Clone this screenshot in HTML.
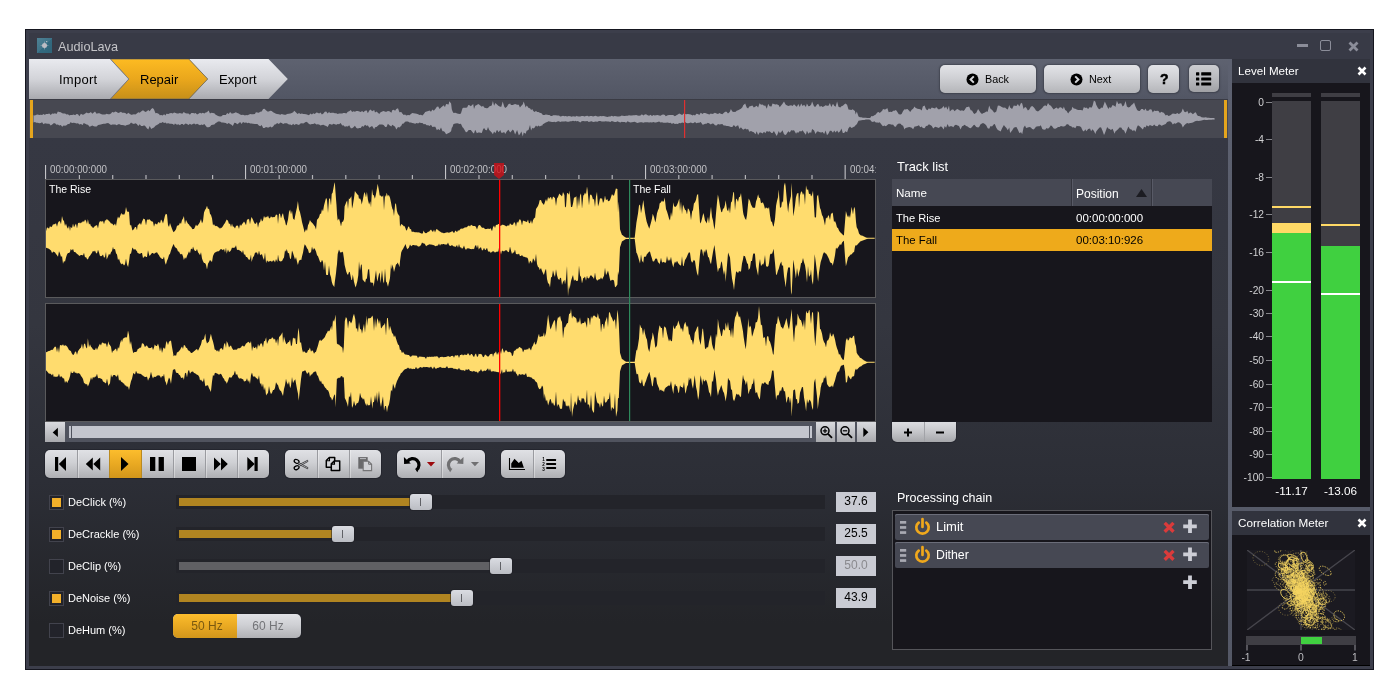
<!DOCTYPE html>
<html lang="en">
<head>
<meta charset="utf-8">
<title>AudioLava</title>
<style>
*{box-sizing:border-box;margin:0;padding:0}
html,body{width:1400px;height:700px;overflow:hidden;background:#fff}
body{font-family:"Liberation Sans",sans-serif;font-size:11px;color:#fff;position:relative}
.a{position:absolute}
.t{position:absolute;white-space:nowrap;line-height:1}
#win{left:25px;top:29px;width:1349px;height:641px;background:#3c3e4b;border:1px solid #15161f}
#title{left:29px;top:33px;width:1341px;height:26px;background:#383a46}
#main{left:29px;top:138px;width:1199px;height:528px;background:linear-gradient(#363843 0%,#34363f 35%,#2c2e36 65%,#232428 92%,#232428 100%)}
#tb{left:29px;top:59px;width:1199px;height:40px;background:linear-gradient(#5e6270,#525664)}
#ov{left:29px;top:99px;width:1199px;height:40px;background:#474851;border-top:1px solid #3a3b44;border-bottom:1px solid #55565c}
.btn{position:absolute;background:linear-gradient(#e2e3e7,#d0d1d5 45%,#b4b5b9);border-radius:5px;color:#000;box-shadow:0 0 1.5px .5px rgba(40,42,52,.45)}
.grp{position:absolute;height:28px;top:450px;border-radius:5px;background:linear-gradient(#e0e1e5,#cfd0d4 45%,#aeafb3);box-shadow:0 0 0 1px rgba(30,32,40,.6);overflow:hidden}
.sep{position:absolute;top:0;width:1px;height:28px;background:#9a9ba0;box-shadow:1px 0 0 rgba(255,255,255,.35)}
.pnl{position:absolute;background:#17161c;border:1px solid #5a5a5c}
.cb{position:absolute;width:15px;height:15px;left:49px;margin-top:-.5px;background:#22232a;border:1px solid #42434d}
.cb.on:after{content:"";position:absolute;left:2px;top:2px;width:9px;height:9px;background:#f2b02a}
.trk{position:absolute;left:176px;width:649px;height:14px;background:#23242a}
.fill{position:absolute;left:179px;height:8px;background:#b18521}
.th{position:absolute;width:22px;height:16px;border-radius:3px;background:linear-gradient(#dadce2,#bbbdc3);box-shadow:0 0 0 1px rgba(30,30,36,.5)}
.th:after{content:"";position:absolute;left:10px;top:4px;width:1px;height:8px;background:#606166}
.val{position:absolute;left:836px;width:40px;height:20px;background:#c9cbd3;color:#000;font-size:12px;text-align:center;line-height:19px}
.lbl{font-size:11px;color:#fff}
.sc{position:absolute;font-size:10.2px;color:#d2d2d4;text-align:right;width:30px;left:1234px;line-height:12px;white-space:nowrap}
.tk{position:absolute;left:1266px;width:6px;height:1px;background:#85858a}
</style>
</head>
<body>
<div id="root" style="position:absolute;left:0;top:0;width:1400px;height:700px;will-change:transform">
<div id="win" class="a"></div>
<div id="title" class="a"></div>
<!-- app icon -->
<svg class="a" style="left:37px;top:38px" width="15" height="15" viewBox="0 0 15 15"><defs><linearGradient id="ig" x1="0" y1="0" x2="1" y2="1"><stop offset="0" stop-color="#4f8194"/><stop offset=".5" stop-color="#3f7489"/><stop offset=".51" stop-color="#336a80"/><stop offset="1" stop-color="#2f6479"/></linearGradient></defs><rect width="15" height="15" fill="url(#ig)"/><path d="M7.500 2.800 L8.100 6.900 L12.200 7.500 L8.100 8.100 L7.500 12.200 L6.900 8.100 L2.800 7.500 L6.900 6.900Z" fill="#c4c4ca"/><circle cx="7.500" cy="7.500" r="2.500" fill="#bdbdc4"/><circle cx="9.7" cy="3.6" r=".7" fill="#c9c9cf"/></svg>
<div class="t" style="left:58px;top:40.700px;font-size:12.700px;color:#c4c4c8">AudioLava</div>
<!-- window controls -->
<div class="a" style="left:1297px;top:44px;width:11px;height:3px;background:#8b8d99"></div>
<div class="a" style="left:1320px;top:40px;width:11px;height:11px;border:1px solid #8b8d99;border-radius:2px"></div>
<svg class="a" style="left:1348px;top:41px" width="11" height="11" viewBox="0 0 11 11"><path d="M1.5 1.5 L9.5 9.5 M9.5 1.5 L1.5 9.5" stroke="#8b8d99" stroke-width="2.8" stroke-linecap="butt"/></svg>

<!-- toolbar -->
<div id="tb" class="a"></div>
<svg class="a" style="left:29px;top:59px" width="270" height="40" viewBox="0 0 270 40">
<defs>
<linearGradient id="gs" x1="0" y1="0" x2="0" y2="1"><stop offset="0" stop-color="#e9eaef"/><stop offset=".5" stop-color="#d3d4d9"/><stop offset="1" stop-color="#a9aaaf"/></linearGradient>
<linearGradient id="gy" x1="0" y1="0" x2="0" y2="1"><stop offset="0" stop-color="#fdbb22"/><stop offset=".5" stop-color="#eaa71c"/><stop offset="1" stop-color="#c68f19"/></linearGradient>
</defs>
<path d="M159.800 0 H239.500 L258.800 20 L239.500 40 H159.800 L178.700 20Z" fill="url(#gs)"/>
<path d="M81.300 0 H159.800 L178.700 20 L159.800 40 H81.300 L99.800 20Z" fill="url(#gy)" stroke="#6f6a5a" stroke-width=".800"/>
<path d="M0 0 H81.300 L99.800 20 L81.300 40 H0Z" fill="url(#gs)"/>
<path d="M81.300 0 L99.800 20 L81.300 40" fill="none" stroke="#77767a" stroke-width=".800"/>
</svg>
<div class="t" style="left:59px;top:73px;font-size:13px;letter-spacing:.25px;color:#000">Import</div>
<div class="t" style="left:140px;top:73px;font-size:13px;color:#000">Repair</div>
<div class="t" style="left:219px;top:73px;font-size:13px;color:#000">Export</div>

<div class="btn" style="left:940.300px;top:65px;width:95.400px;height:28px"></div>
<div class="btn" style="left:1044px;top:65px;width:95.500px;height:28px"></div>
<div class="btn" style="left:1148.200px;top:65px;width:31.300px;height:28px;border-radius:5px"></div>
<div class="btn" style="left:1188.700px;top:65.400px;width:30.400px;height:27px;border-radius:5px;background:linear-gradient(#cbccd0,#bbbcc0 45%,#a0a1a5)"></div>
<svg class="a" style="left:966px;top:73px" width="13" height="13" viewBox="0 0 13 13"><circle cx="6.5" cy="6.5" r="6" fill="#000"/><path d="M7.8 3.4 L4.6 6.5 L7.8 9.6" fill="none" stroke="#d6d7db" stroke-width="2"/></svg>
<div class="t" style="left:985px;top:73.700px;font-size:10.800px;color:#000">Back</div>
<svg class="a" style="left:1070px;top:73px" width="13" height="13" viewBox="0 0 13 13"><circle cx="6.5" cy="6.5" r="6" fill="#000"/><path d="M5.2 3.4 L8.4 6.5 L5.2 9.6" fill="none" stroke="#d6d7db" stroke-width="2"/></svg>
<div class="t" style="left:1089px;top:73.700px;font-size:10.800px;color:#000">Next</div>
<div class="t" style="left:1160px;top:72px;font-size:14px;font-weight:bold;-webkit-text-stroke:.5px #000;color:#000">?</div>
<svg class="a" style="left:1196px;top:72px" width="16" height="14" viewBox="0 0 16 14"><g fill="#000"><rect x="0" y=".3" width="3.300" height="3.200" rx=".500"/><rect x="5.200" y=".3" width="10" height="3.200" rx=".500"/><rect x="0" y="5.400" width="3.300" height="3.200" rx=".500"/><rect x="5.200" y="5.400" width="10" height="3.200" rx=".500"/><rect x="0" y="10.400" width="3.300" height="3.200" rx=".500"/><rect x="5.200" y="10.400" width="10" height="3.200" rx=".500"/></g></svg>

<!-- overview -->
<div id="ov" class="a"></div>
<svg class="a" style="left:0;top:0" width="1400" height="700" viewBox="0 0 1400 700">
<path d="M33.5 115.3L34.9 115.4L36.4 114.7L37.8 114.5L39.2 114.9L40.7 114.8L42.1 115L43.5 113.9L45 115.1L45.8 114.1L47.8 114L49.3 113.4L50.7 115L52.2 113.6L53.6 113.7L55 113.2L56.5 113.9L57.9 111.4L59.3 112L60.8 112.2L62.2 113.3L63.6 113.6L65.1 113.4L66.5 114.6L67.9 114.2L69.4 115.6L70.4 114.9L72.2 115L73.7 114.4L75.1 115.2L76.5 114L78 114.2L79.4 116.2L80.9 113.8L82.7 114.8L83.7 114.6L85.2 113.6L86.6 112.4L88 113.2L89.5 112.9L90.9 112.1L92.3 113.8L93.8 112.6L95 111.6L96.6 113.7L98.1 113.2L99.5 113.3L100.9 114L102.4 114.5L103.8 114.6L105.2 114.5L106.7 113.8L108.1 114.2L109.6 114.2L111 113.5L112.2 112L113.9 112.6L115.3 111.4L116.7 112L118.2 112.9L119.6 112.4L121 111.8L122.1 112.8L123.9 112.7L125.3 113.1L126.8 114.2L128.2 112.7L129.6 113.8L131.1 114.8L131.9 114.8L133.9 114.2L135.4 114.4L136.8 113.5L138.3 112.2L139.7 112.8L141.1 111.5L143 110.3L144 110.9L145.4 112L146.9 111.3L148.3 109.9L149.7 111.2L151.2 108.9L152.8 107.9L154 109.6L155.5 113.3L156.9 112.9L159 114.1L159.8 115.2L161.2 115.1L162.6 115.4L164.1 114.3L165.5 115.5L166.3 113.8L168.4 113.9L169.8 113.3L171.3 113L172.7 113.6L174.1 112.4L174.9 112.8L177 113.4L178.4 113.4L179.9 113.1L181.3 113.6L182.7 113.5L183.6 111.9L185.6 113.3L187 113.5L188.5 113.4L189.9 114.7L191.3 113.1L193.4 112.9L194.2 113.5L195.6 113L197.1 114.5L198.5 113.7L200 112.8L201.4 113.4L202.8 112.8L204.3 113.6L205.7 112.4L206.9 112.2L208.6 110.6L210 113.6L211.4 112.8L212.9 112.9L214.3 113.3L215.7 114.8L217.2 115.6L218 115.9L220 116.5L221.5 116.3L222.9 114.9L224.3 115L225.8 115L227.2 113L228.7 114.1L230.1 112.1L231.5 113.5L232.8 113.6L234.4 113.1L235.8 112.2L237.3 113L238.7 113.4L240.1 114.6L241.6 115.1L243 114.7L245.1 115.5L245.9 114.9L247.3 115.2L248.7 114.8L250.2 113.9L251.6 114.2L253 114.3L254.9 113.9L255.9 112.3L257.4 112.4L258.8 112.8L260.2 111.8L261.7 111.4L263.1 108.9L264.5 108.7L266 110.2L267.4 111.5L268.8 111.4L270.3 110.7L271.7 111.1L273.1 112.3L274.6 112.9L276 113.7L277 113.9L278.9 114.3L280.3 114.7L281.7 114L283.2 114.5L284.6 114.7L286 114.7L286.9 113.9L288.9 113.8L290.4 113.4L291.8 113L293.2 112.3L294.2 110.7L296.1 112.6L297.5 113.9L299 113.1L300.4 114L301.8 113.5L303.3 114.1L304.1 114L306.1 114.2L307.6 114.8L309 115.2L310.4 113.4L311.9 114.4L313.3 113.3L314.7 114L316.4 112.6L317.6 112.8L319.1 113.5L320.5 112.5L321.9 114.4L323.4 113.6L324.8 111.8L326.2 111.4L327.7 113.5L329.1 111.7L329.9 112.9L332 112.7L333.4 112.8L334.8 113.2L336.3 113.3L337.7 114.1L339.1 113.6L340.6 113.4L342.2 113.6L343.4 113L344.9 112.9L346.3 113.5L347.8 111.8L349.2 111.2L350.8 110L352.1 111.9L353.5 111.3L354.9 111.8L356.4 110.9L357.8 111.1L359.4 111.5L360.7 112.1L362.1 111L363.5 112.3L365 110.8L366.8 110.5L367.8 113.2L369.3 110.6L370.7 109.4L372.1 111.3L374.2 109.9L375 112.4L376.5 111.5L377.9 112.8L379.3 114.1L380.3 112.5L382.2 111.6L383.6 111.1L385.3 111.7L386.5 111.7L387.9 110.9L389.4 111.2L391.4 112.7L392.2 110.2L393.7 109.8L395.1 110.7L396.3 109.1L398 108.2L399.4 112.2L401.3 112L402.3 113.4L403.7 115L405.1 114.6L406.2 115.6L408 115L409.5 115.2L410.9 113.9L412.3 113L413.6 113.2L415.2 113.4L416.6 113.8L418.1 114.2L419.5 114.9L420.9 114.7L422.4 115.4L423.8 114.1L425.2 112.1L426.7 111.5L428.3 111L429.5 110.4L431 111.8L432.4 109.6L433.8 110.7L435.3 109.1L436.9 106.8L438.2 106.5L439.6 109L441 107.5L442.5 106.2L443.9 105.2L444.9 107.2L446.1 104.1L448.6 104.6L449.3 101.3L451.1 103.6L451.8 109.3L452.5 111.3L453.5 113L455.4 112.8L457.2 113.5L458.2 113.7L459.7 114.1L460.9 113.4L462.5 108.2L463.4 107.8L465.9 107.7L467.1 107.6L468.3 104.9L469.5 105.3L470.8 106.3L473.2 104L474 109.1L475.2 105.7L476.9 105L478.2 104.1L479.4 104.7L481.8 106.8L483.1 105.7L484.1 107.4L485.5 108.1L486.9 108.3L488 107.9L489.2 106.5L491.7 105.6L492.9 101L494.1 105.8L495.4 103L497 104.4L498.6 106.1L500.3 106.7L501.3 106.8L502.7 101.4L504.2 106.6L505.2 107.9L506.9 106.8L508.4 104.2L510.2 103.4L510.9 104.9L512.8 104.9L513.8 104.4L515.1 104L517.1 104.7L518.8 104.8L519.9 107.5L521.4 105.8L522.8 104.2L523.7 101.4L525.7 107.5L526.6 105.4L527.4 106.2L528.6 107.9L530 108.2L531.1 110L532.3 109.1L533 110.4L534.3 112.1L536 111.1L537.2 111.9L538.4 112L539.7 112.8L541.5 113.3L542.1 113.9L542.9 115L544.6 115.1L545.8 114.5L547.2 114.7L548.6 115L549.5 115.1L550.8 115.9L552 115.9L553.2 115.2L554.4 115.3L555.7 115.2L557.3 115.5L558.7 115.5L559.4 115.8L560.1 116.5L561.6 116.2L563 115.7L564.4 116.3L565.5 116.1L567.3 116.4L568.7 116.1L570.4 116.2L571.6 116.7L573 116.3L574.5 116.6L575.9 116.4L576.6 115.8L577.3 116.2L578.8 116.4L580.3 116.5L581.6 116.1L583.1 116.1L584.5 116.4L585.9 116.1L587.4 115.7L588.8 116.6L590.3 116.1L591.7 115.9L593.1 116.4L594.6 115.9L595.6 115.7L597.4 116.4L598.9 116.5L600.3 116.1L601.7 116.2L603.2 116.1L604.6 116.3L605.4 116.6L607.5 116.9L608.9 116.4L610.3 116.4L611.8 115.8L613.2 116.5L614.7 115.9L616.1 116.2L617.5 116.4L619 116.5L620.4 116.3L621.8 115.6L622.6 115.7L624.7 116.1L626.1 115.7L627.6 115.7L629 115.3L630.4 115.5L631.9 115.4L633.3 115.3L634.7 115.3L636.2 115.1L637.6 115.4L639 115.7L640.5 115.5L641.9 114.3L643.3 115.6L644.8 114.5L646 114.3L647.7 115.3L649.1 115.7L650.5 114.7L652 116.1L653.4 115L654.8 115.5L655.9 115.2L657.7 115L659.1 115.6L660.6 115.7L662 114.7L663.4 114.4L664.9 115.1L665.7 116.2L667.7 115.2L669.2 115L670.6 115L672 115.1L673.1 114.9L674.9 116.3L676.4 115.2L677.8 114.6L679.2 113.6L680.7 114.2L682.1 115.1L684.1 113.3L685 113.9L686.4 114.3L687.8 114L689.3 114.3L690.7 114.4L692.8 115.5L693.6 114.8L695 115.4L696.4 113.7L697.9 114L699.3 114.9L700.7 112.8L702.6 113.9L703.6 112.9L705.1 113L706.5 113.5L707.9 114.1L709.4 114.6L710.8 113.4L712.2 114.1L713.7 113.6L714.9 112.7L716.5 113.5L718 113.9L719.4 113L720.8 113.7L722.3 114.2L723.7 113L725.1 111.8L726.6 111.8L728 113.6L729.7 112L730.9 108.9L732.3 111.4L733.8 112L735.8 111.8L736.6 110.7L738.1 110.2L739.5 109.5L740.9 108.7L742.4 107.3L743.2 105.3L745.2 103.6L746.7 107.5L748.1 108.4L749.3 106.6L751 106.1L752.4 105.6L753.8 107.6L755.5 106.4L756.7 105.7L758.1 107.4L759.6 103.3L761 104.7L762.4 104.4L764.1 105.7L765.3 105.5L766.8 108.7L768.2 103.8L769.6 106.2L771.5 106.6L772.5 103.6L773.9 103.9L775.4 104.5L776.8 104.2L778.8 105.2L779.7 107.2L781.1 105.4L782.5 103.7L784 101.4L785.4 104.2L786.2 105.1L788.3 105.9L789.9 105.5L791.1 105.3L792.6 106L794 104.2L796.1 106.2L796.9 106.8L798.3 104.1L799.8 107L801.2 103.6L802.6 106.1L804.1 104.8L805.9 107.1L806.9 103.5L808.4 106.2L809.8 106.1L811.2 104.4L812.1 101.5L814.1 106.4L815.5 106.7L817 104.5L818.2 103.8L819.8 106.7L821.3 105.9L822.7 107.1L824.2 106.2L825.6 105.3L827 105.7L828.5 105.7L829.9 103.1L831.3 107L833 103.7L834.2 105.7L835.6 106.8L837.1 101.5L838.5 106.7L840.3 107.5L841.4 106.2L842.8 105.7L844.2 104.6L845.3 103.5L847.1 104.8L848.5 109.6L850 109.8L851.4 110L852.6 109.3L854.9 111L855.7 114.4L856.8 111.6L858.5 116.5L860 117.2L861.3 117.2L862.9 117.8L864.3 117.8L865.8 117.8L867.2 118L868.6 118.1L870.1 118L871.5 115.9L872.9 116.2L874.4 115.2L875.8 114.5L877.2 112.6L878.7 112.1L879.7 113L882.2 110.8L883 109L884.4 109.4L885.9 109.3L887.3 108L888.7 112.2L890.2 111.7L892 112.1L893 110.8L894.5 110.7L895.9 109.9L896.9 111.2L898.8 114.2L900.6 114.4L901.6 114.1L903.1 111L904.5 109.3L905.5 109.4L907.4 109L909.2 110.7L910.2 112.1L911.7 109.8L913.1 108.8L914.6 106.4L915.4 107.7L917.4 108.8L918.9 108.9L920.3 109.2L921.7 110.5L922.8 106.5L924.6 105.4L926 109.2L927.5 110.3L928.9 108.3L930.3 109.3L931.8 107.6L933.2 108L935.1 108.6L936.1 107L937.5 108.4L938.9 109.6L940.4 108.7L941.8 108.3L943.7 106.1L944.7 108.4L946.1 106.4L947.6 109.7L949 105.6L949.8 111.4L951.9 109.5L953.3 109.5L954.7 111.3L956 109.7L957.6 109L959 110L960.5 110.7L962.1 110.3L963.3 110.9L964.6 109.9L966.2 107.3L967.6 106.9L969.1 106.5L970.7 110.3L972 110.5L973.4 113.1L974.4 114L976.3 112.7L978.1 109L979.1 110.4L980.6 112.7L982 113.9L983 113.3L984.9 112.6L986.3 111.5L987.7 111.8L989.2 105.5L990.6 109L992 109.8L994.1 112.4L994.9 112.6L996.3 111.6L997.8 105.7L999 105.5L1000.6 106.3L1002.1 107.3L1003.9 107.8L1005 107.6L1006.4 108.8L1007.8 109.4L1009.3 105.1L1010.1 107.4L1012.1 108.9L1013.8 105.6L1015 105.7L1016.4 106.1L1017.9 103.9L1019.3 106.5L1021.1 102.8L1022.2 103.6L1023.6 108.9L1025 107L1026.1 107.5L1027.9 110.6L1029.3 109.6L1030.8 106.7L1032.2 106L1033.7 107.3L1035.1 109L1035.9 110.4L1038 111.6L1039.6 110.2L1040.8 109.2L1042.3 107.9L1043.3 106.5L1045.1 105.2L1046.6 106.3L1048 102.9L1049.4 104.9L1050.9 105.8L1052.3 107.8L1053.7 109.6L1055.2 108.3L1056.8 107.4L1058 109.1L1059.5 107.6L1060.9 107.3L1063 109.1L1063.8 106.6L1065.2 109.9L1066.7 111.1L1068.1 113.5L1069.5 111.4L1071.6 109.7L1072.4 106.7L1073.8 108.6L1075.3 108.7L1076.7 109.5L1078.1 109.9L1079 110L1081 109.9L1082.6 110.6L1083.9 106.9L1085.3 108.1L1086.3 107.6L1088.2 109.1L1090 106.7L1091.1 108.1L1092.5 106.1L1093.9 100.5L1095.4 101.8L1096.2 104.8L1098.2 108.5L1099.9 109.2L1101.1 107.6L1102.5 108L1104 103.9L1104.8 101.6L1107.2 106.6L1108.3 109.1L1109.7 106.9L1110.9 108L1112.6 104.9L1114.6 105.9L1115.4 106.9L1116.9 100.7L1118.3 104L1119.5 103.6L1121.2 103.2L1122.6 106.5L1124.1 105.2L1125.5 101L1126.9 106.4L1128.4 107.4L1129.8 107.1L1131.8 104.7L1132.7 104.2L1134.1 102.4L1135.5 106.4L1137 109.8L1138 110.8L1139.8 111.1L1141.3 108.9L1142.9 109L1144.1 110.4L1145.6 108.6L1146.6 110.7L1148.4 110.7L1149.9 109.3L1151.5 109.5L1152.8 112.5L1154.2 110.4L1155.6 111L1157.7 110.8L1158.5 111.1L1159.9 112.9L1161.4 111.8L1162.8 112.4L1163.8 112.8L1165.7 115.5L1167.1 114.8L1168.5 115.9L1170 115.6L1171.4 114.5L1172.8 113.4L1174.3 113.7L1175.7 113.9L1177.4 113L1178.6 114L1179.8 113.6L1181.5 112.1L1182.8 108.5L1184.3 111.7L1186 112.2L1187.2 110.8L1188.6 113.7L1190.1 112.5L1190.9 112.6L1192.9 114.2L1194.6 112.8L1195.8 112.3L1197.2 115.2L1198.3 116.1L1200.1 116.3L1201.5 117.2L1203.2 117.4L1204.4 117.6L1205.8 117.3L1207.3 117.8L1208.7 117.8L1210.2 118L1211.6 118L1213 118.1L1214.5 117.9L1214.5 119.7L1213 119.5L1211.6 119.7L1210.2 119.7L1208.7 119.8L1207.3 120.1L1205.8 120.1L1204.4 119.8L1203.2 120.1L1201.5 120.4L1200.1 120.7L1198.3 121.1L1197.2 120.8L1195.8 121.1L1194.6 121.6L1192.9 122.6L1190.9 122.9L1190.1 122.9L1188.6 123.5L1187.2 123L1186 123.8L1184.3 125.2L1182.8 127.4L1181.5 124.2L1179.8 122.8L1178.6 122.2L1177.4 122.5L1175.7 123.7L1174.3 123.3L1172.8 124.6L1171.4 122.2L1170 121.2L1168.5 121.5L1167.1 122.1L1165.7 124L1163.8 124.8L1162.8 125.3L1161.4 125.7L1159.9 124.5L1158.5 124.7L1157.7 126.3L1155.6 125.9L1154.2 124.5L1152.8 125.9L1151.5 125.8L1149.9 125.1L1148.4 126.6L1146.6 125.2L1145.6 127.4L1144.1 126.8L1142.9 129.4L1141.3 128L1139.8 126.6L1138 125.3L1137 127.1L1135.5 131.7L1134.1 130.1L1132.7 131.1L1131.8 129.8L1129.8 129.1L1128.4 126.6L1126.9 129.9L1125.5 133.7L1124.1 130.5L1122.6 129.8L1121.2 127.5L1119.5 127.4L1118.3 128.9L1116.9 130.3L1115.4 131.6L1114.6 133.8L1112.6 128.8L1110.9 129.9L1109.7 129.1L1108.3 128.5L1107.2 126.9L1104.8 133.6L1104 135L1102.5 130.7L1101.1 127.4L1099.9 127.2L1098.2 129L1096.2 131.6L1095.4 134.1L1093.9 131.1L1092.5 129.3L1091.1 131.2L1090 128.5L1088.2 129L1086.3 131.2L1085.3 129.3L1083.9 131.6L1082.6 130.6L1081 127.1L1079 126L1078.1 126.2L1076.7 125.8L1075.3 128.2L1073.8 127.3L1072.4 127.5L1071.6 126.4L1069.5 125.7L1068.1 124.3L1066.7 124.3L1065.2 126L1063.8 126.6L1063 126.5L1060.9 125.9L1059.5 126.9L1058 126.9L1056.8 127.9L1055.2 128.7L1053.7 128.4L1052.3 126.6L1050.9 125.3L1049.4 127.5L1048 128.7L1046.6 128L1045.1 129.7L1043.3 129.5L1042.3 129.1L1040.8 125.3L1039.6 126.3L1038 126.3L1035.9 126.7L1035.1 128.1L1033.7 129.4L1032.2 129L1030.8 127.5L1029.3 127L1027.9 127.4L1026.1 127.9L1025 125.6L1023.6 127.4L1022.2 134.3L1021.1 132.2L1019.3 133L1017.9 129.7L1016.4 127.1L1015 127.2L1013.8 127.8L1012.1 130.6L1010.1 132.9L1009.3 127.6L1007.8 130.2L1006.4 127.9L1005 126.4L1003.9 125.1L1002.1 128.3L1000.6 131.4L999 130.5L997.8 129.9L996.3 127.8L994.9 124.3L994.1 124.1L992 126.6L990.6 126.1L989.2 128.7L987.7 128.2L986.3 125.4L984.9 123.9L983 123.1L982 123.6L980.6 124.2L979.1 127L978.1 127.6L976.3 127.1L974.4 124.7L973.4 125.3L972 127.1L970.7 128.2L969.1 127.8L967.6 126.5L966.2 126L964.6 124.8L963.3 125.7L962.1 126.3L960.5 129.5L959 126L957.6 125.5L956 124.8L954.7 125.2L953.3 127.2L951.9 126.2L949.8 126.2L949 127.3L947.6 124.1L946.1 127.8L944.7 126.1L943.7 129.6L941.8 126.7L940.4 126.5L938.9 127.9L937.5 127.6L936.1 127.1L935.1 126.7L933.2 128.4L931.8 126.1L930.3 125L928.9 124.3L927.5 125.7L926 125.9L924.6 128.3L922.8 128L921.7 126.4L920.3 127.3L918.9 125.2L917.4 126.1L915.4 126.4L914.6 126.5L913.1 129.2L911.7 127.7L910.2 127.2L909.2 126.9L907.4 127.5L905.5 128L904.5 129.6L903.1 125.7L901.6 124.9L900.6 123.8L898.8 123.5L896.9 124.7L895.9 126.7L894.5 126.6L893 124.5L892 124.8L890.2 124.2L888.7 123.9L887.3 125L885.9 126.2L884.4 125.6L883 126.3L882.2 125.4L879.7 122.3L878.7 122.7L877.2 122.5L875.8 122.5L874.4 121.3L872.9 122L871.5 121.6L870.1 119.7L868.6 119.5L867.2 119.6L865.8 119.5L864.3 120.1L862.9 120L861.3 120.2L860 120.4L858.5 120.7L856.8 124.2L855.7 124.9L854.9 126.3L852.6 127.6L851.4 128.1L850 126.6L848.5 128.3L847.1 132.2L845.3 131.2L844.2 133.1L842.8 133L841.4 128.5L840.3 131L838.5 132.8L837.1 130.6L835.6 132.6L834.2 130.6L833 132.7L831.3 130.7L829.9 130.8L828.5 133.5L827 135.2L825.6 130.5L824.2 133.9L822.7 132L821.3 132.5L819.8 132.3L818.2 131.5L817 131.6L815.5 133.9L814.1 130.5L812.1 129.1L811.2 132.8L809.8 132.3L808.4 133.8L806.9 130.8L805.9 134.7L804.1 132.4L802.6 130.3L801.2 131.5L799.8 131L798.3 132.8L796.9 132.2L796.1 133.8L794 130.3L792.6 130.5L791.1 130.3L789.9 132.6L788.3 131.3L786.2 134.5L785.4 135.1L784 134.2L782.5 130.3L781.1 132.2L779.7 133.1L778.8 131.1L776.8 135.9L775.4 133.8L773.9 131.1L772.5 132.9L771.5 133.1L769.6 131.2L768.2 131.8L766.8 131.1L765.3 133.3L764.1 131.8L762.4 133.6L761 132.4L759.6 132.4L758.1 135L756.7 131.3L755.5 134.2L753.8 132.3L752.4 131.8L751 130.9L749.3 131.8L748.1 129.1L746.7 129.5L745.2 128.4L743.2 129.8L742.4 129.1L740.9 127.3L739.5 129L738.1 125.3L736.6 126L735.8 127.1L733.8 124.9L732.3 126.9L730.9 127L729.7 126.4L728 125.9L726.6 126L725.1 125.6L723.7 125.4L722.3 124.1L720.8 124.3L719.4 124.6L718 124.1L716.5 125.6L714.9 125.2L713.7 123.8L712.2 123.6L710.8 124.6L709.4 123.4L707.9 122.7L706.5 123.7L705.1 123.8L703.6 124.5L702.6 124.8L700.7 122L699.3 122.8L697.9 122.7L696.4 123.2L695 122.1L693.6 122.9L692.8 123.3L690.7 122.6L689.3 123L687.8 123.2L686.4 123L685 122.1L684.1 122.9L682.1 122.5L680.7 123.3L679.2 123.1L677.8 123.9L676.4 123.7L674.9 123.9L673.1 122.9L672 123.9L670.6 122.7L669.2 123.1L667.7 122.5L665.7 122.8L664.9 122.7L663.4 122.7L662 122.3L660.6 122.5L659.1 121.6L657.7 122.1L655.9 122.6L654.8 122.4L653.4 122.1L652 122.4L650.5 122.2L649.1 122.5L647.7 122.2L646 122.3L644.8 122.3L643.3 122.8L641.9 122.3L640.5 122.3L639 122.6L637.6 122.9L636.2 122.6L634.7 121.7L633.3 122L631.9 122.2L630.4 122.4L629 122.1L627.6 121.3L626.1 122.8L624.7 122L622.6 121.9L621.8 121.8L620.4 122.5L619 122L617.5 121.2L616.1 122.1L614.7 122.1L613.2 121.4L611.8 121.1L610.3 121.9L608.9 121.5L607.5 121.4L605.4 121.2L604.6 121.5L603.2 121.6L601.7 121.6L600.3 121.1L598.9 121L597.4 121.8L595.6 121.5L594.6 121.8L593.1 122L591.7 121.3L590.3 121.4L588.8 121.9L587.4 121.1L585.9 121.3L584.5 121.3L583.1 121L581.6 121.3L580.3 122.4L578.8 121.6L577.3 121L576.6 121.4L575.9 120.8L574.5 121.2L573 120.8L571.6 121.3L570.4 121.2L568.7 121.8L567.3 121.7L565.5 121.3L564.4 121.6L563 121.5L561.6 121.5L560.1 122.1L559.4 121.6L558.7 121.3L557.3 121.6L555.7 122.3L554.4 121.7L553.2 122L552 121.9L550.8 121.7L549.5 121.5L548.6 121.2L547.2 121.9L545.8 122.6L544.6 123.2L542.9 124.2L542.1 125.7L541.5 125.6L539.7 126.4L538.4 125.5L537.2 126.7L536 125.5L534.3 128L533 128.5L532.3 127.7L531.1 130.5L530 125.1L528.6 129.7L527.4 130.5L526.6 130.8L525.7 133.7L523.7 132.5L522.8 136.4L521.4 131.4L519.9 134.2L518.8 135.3L517.1 130L515.1 134.5L513.8 130.8L512.8 129.5L510.9 131.7L510.2 132.4L508.4 129.7L506.9 131.3L505.2 133.9L504.2 132.1L502.7 132.8L501.3 132.7L500.3 130L498.6 132.2L497 129.8L495.4 133.2L494.1 131.5L492.9 134.2L491.7 132.4L489.2 129.9L488 126.9L486.9 130.3L485.5 130L484.1 128L483.1 129.2L481.8 133L479.4 132.4L478.2 132.4L476.9 133.3L475.2 129.8L474 133.4L473.2 133L470.8 130.1L469.5 129.9L468.3 130.3L467.1 132L465.9 132.3L463.4 127.9L462.5 127.3L460.9 123.8L459.7 123.9L458.2 123.4L457.2 123.3L455.4 123.5L453.5 123.9L452.5 126.9L451.8 127.8L451.1 131.2L449.3 132.8L448.6 133.1L446.1 134.3L444.9 132.2L443.9 131.2L442.5 131.3L441 127.6L439.6 130.3L438.2 129.1L436.9 130.3L435.3 126.8L433.8 126.8L432.4 127.1L431 124.8L429.5 126L428.3 125.3L426.7 125.3L425.2 124L423.8 124.3L422.4 122.9L420.9 123.1L419.5 122.6L418.1 123.4L416.6 123L415.2 123.8L413.6 123.2L412.3 122.9L410.9 122.4L409.5 122.4L408 121.4L406.2 121.5L405.1 121.7L403.7 123.4L402.3 123.7L401.3 125.7L399.4 127.5L398 126.9L396.3 129.6L395.1 126.8L393.7 125.8L392.2 124.7L391.4 126.4L389.4 125.3L387.9 123.7L386.5 127.1L385.3 127L383.6 125.1L382.2 124.5L380.3 124.4L379.3 124.5L377.9 125.7L376.5 127.1L375 127.2L374.2 129.2L372.1 126.1L370.7 126.7L369.3 127.8L367.8 125.3L366.8 126.1L365 124.7L363.5 126.7L362.1 125.9L360.7 128L359.4 127.9L357.8 128.4L356.4 127.9L354.9 125.8L353.5 127.3L352.1 128.2L350.8 128.3L349.2 125.2L347.8 126.6L346.3 126.3L344.9 126.7L343.4 125.2L342.2 125.6L340.6 123.1L339.1 124.2L337.7 124.1L336.3 124.7L334.8 124.3L333.4 123.7L332 124.7L329.9 123.9L329.1 124.2L327.7 127L326.2 125.9L324.8 125.4L323.4 124.7L321.9 124.9L320.5 125.4L319.1 124.5L317.6 124.2L316.4 124.4L314.7 123.3L313.3 124L311.9 124L310.4 124.6L309 124L307.6 122.5L306.1 121.8L304.1 122.9L303.3 123.5L301.8 123.3L300.4 123.5L299 124.9L297.5 124.4L296.1 124.1L294.2 124.9L293.2 123.8L291.8 125.3L290.4 124.4L288.9 124.4L286.9 123.2L286 123.3L284.6 123.2L283.2 124.1L281.7 122.9L280.3 122.4L278.9 123.9L277 123L276 124.2L274.6 124.4L273.1 126.5L271.7 127.6L270.3 126.5L268.8 127.5L267.4 127.5L266 127.1L264.5 128.1L263.1 128L261.7 125L260.2 126.2L258.8 125.5L257.4 123.9L255.9 124.1L254.9 124.1L253 123.8L251.6 123.4L250.2 123.5L248.7 122.7L247.3 123.3L245.9 122.3L245.1 122.9L243 122.1L241.6 123.9L240.1 122L238.7 123.3L237.3 124.3L235.8 123.1L234.4 122.7L232.8 125.9L231.5 124.7L230.1 124.1L228.7 122.9L227.2 123.9L225.8 123.1L224.3 122.7L222.9 122.4L221.5 122.4L220 121.6L218 121.6L217.2 122.3L215.7 123.1L214.3 124.6L212.9 124.7L211.4 125.1L210 126.8L208.6 127.3L206.9 127.2L205.7 125.7L204.3 124.1L202.8 124.9L201.4 124.5L200 125.2L198.5 124.6L197.1 123.7L195.6 124.4L194.2 123.6L193.4 123.8L191.3 124.8L189.9 123.8L188.5 125L187 124.1L185.6 123.6L183.6 125.1L182.7 124.1L181.3 124L179.9 125.3L178.4 124.2L177 124.8L174.9 123.4L174.1 125L172.7 123.9L171.3 123.7L169.8 123.7L168.4 123.3L166.3 123.6L165.5 122.4L164.1 122.9L162.6 122.1L161.2 122.9L159.8 122.8L159 123.7L156.9 124.9L155.5 125.8L154 127.5L152.8 128.1L151.2 129.1L149.7 126.1L148.3 129.4L146.9 128.2L145.4 126.3L144 125.3L143 126.1L141.1 126L139.7 124.2L138.3 125.9L136.8 124.1L135.4 123.2L133.9 123.9L131.9 123.3L131.1 122.6L129.6 124.3L128.2 124.8L126.8 125L125.3 125.7L123.9 125.3L122.1 124.9L121 125L119.6 124.3L118.2 124.2L116.7 125.3L115.3 124.6L113.9 124.4L112.2 124.5L111 124.9L109.6 124L108.1 123.1L106.7 123.3L105.2 123.7L103.8 123.8L102.4 124.1L100.9 124.5L99.5 124.8L98.1 125.1L96.6 126.4L95 126.4L93.8 126.2L92.3 125.6L90.9 126.2L89.5 126.8L88 124.8L86.6 124.6L85.2 123.7L83.7 123L82.7 125L80.9 124.1L79.4 124.5L78 123.3L76.5 123.6L75.1 122.9L73.7 122.8L72.2 123.1L70.4 122.2L69.4 124L67.9 123.9L66.5 125.2L65.1 125.7L63.6 125.5L62.2 126.8L60.8 125.1L59.3 125.6L57.9 124.5L56.5 124.7L55 123.3L53.6 123.2L52.2 124.4L50.7 125.5L49.3 123.8L47.8 123.7L45.8 123.5L45 123.2L43.5 124.3L42.1 122.2L40.7 123L39.2 123.3L37.8 122.7L36.4 122.7L34.9 122L33.5 122.4Z" fill="#a1a1ab"/>
<rect x="30" y="100" width="3" height="38" fill="#e5a51d"/>
<rect x="1224" y="100" width="3" height="38" fill="#e5a51d"/>
<rect x="684" y="100" width="1.2" height="38" fill="#e03030"/>
</svg>

<!-- main area -->
<div id="main" class="a"></div>

<!-- ruler -->
<svg class="a" style="left:0;top:160px" width="880" height="20" viewBox="0 160 880 20">
<g fill="#c4c4c8">
<rect x="45" y="165" width="1.100" height="14"/><rect x="245" y="165" width="1.100" height="14"/><rect x="445" y="165" width="1.100" height="14"/><rect x="645" y="165" width="1.100" height="14"/><rect x="844.600" y="165" width="1.100" height="14"/>
</g>
<g fill="#b4b4b8" id="minor">
<rect x="78.8" y="175" width="1.2" height="4"/><rect x="112.1" y="175" width="1.2" height="4"/><rect x="145.4" y="175" width="1.2" height="4"/><rect x="178.7" y="175" width="1.2" height="4"/><rect x="212" y="175" width="1.2" height="4"/>
<rect x="278.6" y="175" width="1.2" height="4"/><rect x="311.9" y="175" width="1.2" height="4"/><rect x="345.2" y="175" width="1.2" height="4"/><rect x="378.5" y="175" width="1.2" height="4"/><rect x="411.8" y="175" width="1.2" height="4"/>
<rect x="478.4" y="175" width="1.2" height="4"/><rect x="511.7" y="175" width="1.2" height="4"/><rect x="545" y="175" width="1.2" height="4"/><rect x="578.3" y="175" width="1.2" height="4"/><rect x="611.6" y="175" width="1.2" height="4"/>
<rect x="678.2" y="175" width="1.2" height="4"/><rect x="711.5" y="175" width="1.2" height="4"/><rect x="744.8" y="175" width="1.2" height="4"/><rect x="778.1" y="175" width="1.2" height="4"/><rect x="811.4" y="175" width="1.2" height="4"/>
</g>
</svg>
<div class="t" style="left:50px;top:164px;font-size:11px;transform:scaleX(.888);transform-origin:0 0;color:#c2c2c6">00:00:00:000</div>
<div class="t" style="left:250px;top:164px;font-size:11px;transform:scaleX(.888);transform-origin:0 0;color:#c2c2c6">00:01:00:000</div>
<div class="t" style="left:450px;top:164px;font-size:11px;transform:scaleX(.888);transform-origin:0 0;color:#c2c2c6">00:02:00:000</div>
<div class="t" style="left:650px;top:164px;font-size:11px;transform:scaleX(.888);transform-origin:0 0;color:#c2c2c6">00:03:00:000</div>
<div class="t" style="left:850px;top:164px;font-size:11px;transform:scaleX(.888);transform-origin:0 0;color:#c2c2c6;width:29px;overflow:hidden">00:04:</div>

<!-- waveform panels -->
<div class="pnl" style="left:45px;top:179px;width:831px;height:119px"></div>
<div class="pnl" style="left:45px;top:303px;width:831px;height:119px"></div>
<svg class="a" style="left:46px;top:180px" width="829" height="241" viewBox="46 180 829 241">
<defs><clipPath id="c1"><rect x="46" y="180" width="829" height="117"/></clipPath><clipPath id="c2"><rect x="46" y="304" width="829" height="117"/></clipPath></defs>
<path clip-path="url(#c1)" d="M45 228.8L46 231.3L47 227.6L48 227.8L49 228.7L50 225.9L51 227.2L52 226.6L53 224.3L53.6 224.5L55 224L56 223.3L57 226.7L58 222.7L59 221.3L60 221.3L61 224.2L62 215.9L63 220L64 220.9L65 226.1L66 223.5L67 226.9L68 228.7L69 225.4L70 230.9L70.7 226.8L72 228.3L73 223.5L74 227.5L75 225.3L76 223.6L77 228.6L78 223.2L79.3 222.4L80 223.4L81 222.4L82 222.4L83 221.1L84 221.9L85 219.4L86 220.7L87 224.1L87.9 219L89 224.5L90 223.4L91 226.2L92 226.6L93 228.2L94 227L95 225.9L96 225.5L97 225L98 228.5L99 223.1L99.9 221.2L101 221.2L102 221.7L103 220.8L104 224.3L105 220.2L106 220.6L106.7 218.9L108 219.9L109 221L110 222.1L111 223.5L112 223.6L113 224.4L113.6 225.6L115 223.6L116 225.9L117 220.1L118 216.5L119 218.4L120 216.6L121.3 212.7L122 214.7L123 213.9L124 214.9L125 213.1L126 207.1L127 211.3L128.1 211.9L129 211.6L130 225.8L131 224.5L132.4 230.5L133 230.1L134 229L135 227.1L136 227L137 230.2L137.6 225.6L139 223.9L140 222.9L141 224.9L142 221.8L143 219.5L143.6 218.6L145 219.4L146 225.5L147 219.4L148 219.7L149 219.6L149.6 219.2L151 220.9L152 221.6L153 221.8L154 226.8L155 223.5L156.4 224L157 224.8L158 222.4L159 222L160 223.6L161 219.4L162 220.8L163 223.6L164 219.7L165 215.6L165.9 213.7L167 214.5L168 224.9L169 227L170 222.9L171 226L172 228.8L173 231.2L173.6 232.2L175 230.7L176 229.3L177 225.8L178 225.6L179 224.9L180 222.5L181 223.9L182 219.9L183 218.6L183.9 216.1L185 224.5L186 219.8L187 222L188 223.8L189 224.4L190 226.2L191 226.8L192.4 229.2L193 229.1L194 228.9L195 227.1L196 224.4L197 226.2L198 224.9L199.3 223.3L200 221.7L201 218.9L202 223.5L203 221.1L204 212.6L205 210.1L206 208.4L207 205.7L208 209.2L209 208.4L210 213.7L211 215L212 218.3L213 225.4L214 223.9L214.7 225.5L216 226.2L217 225.8L218 227.3L219 227.5L220 228.8L221 227.4L221.6 228L223 226L224 224.2L225 223.1L226 220.7L226.7 219.5L228 220.8L229 223.9L230 223.6L231 226.9L232 223.4L233 226.9L233.6 226.2L235 228.4L236 225.9L237 225.6L238 225.8L239 229.1L240 224.2L241 226.1L242.1 224L243 222.9L244 221.6L245 222.9L246 225.2L247 219.5L248 219.5L249 218.8L250 224.2L251 218.8L251.6 217L253 219.8L254 222.3L255 223.9L256 223.6L257 221.7L258 227.7L259 222.9L260.1 222L261 218.2L262 221.5L263 220.2L264 215.8L265 218.1L266.1 216.4L267 217.5L268 215.4L269 218.2L270 218.2L271 216.2L272.1 217.4L273 216.9L274 217.3L275 216.7L276 214.4L277.3 214.9L278 224L279 213.7L280 213.7L281 218.6L282.4 213.9L283 213.2L284 218.6L285 220.9L286 225.5L286.7 225L288 219.5L289 211.9L290.1 209.4L291 214.2L292 210.6L293 218.6L294.4 220.1L295 216.5L296 211.7L297 207.3L297.9 200.9L299 209.5L300 212.2L301.3 218.1L302 222L303 225.8L304 229.8L304.7 232.4L306 229.1L307 231L308 225.2L309 223.2L309.9 220L311 221.7L312 222.7L313 223.8L314 225.2L315 226.4L316 229.4L317 219.8L318 218.8L319 217.3L320.1 213.4L321 214.1L322 209.1L323 211.5L324 205.4L325 201.7L326.1 197.8L327 199.7L328 212.9L329 199.3L330 198.1L331 205.6L331.7 194L332.6 192.7L334.3 183.7L334.8 182.2L336 199L336.5 204.9L337 213.9L337.7 220.5L339 218.4L340.3 222.9L341 226.6L342 221.5L342.9 222L344 219.1L344.6 206.6L346.3 202.1L347.2 200.4L348 209.1L348.9 198.5L349.7 198.9L351.4 196.3L352 208.7L352.8 205.6L354 198.1L354.9 190.9L355.7 192.2L357.4 194.5L358.3 194.9L359 199L360 198.3L361 200.5L361.7 204.4L362.6 200.7L364.3 191.9L365.2 194.1L366 197.6L366.9 191.8L368 200.1L369.1 204.4L370.3 201.2L371 207.5L372 189.1L373 195.3L373.7 195L374.9 198.8L376 194.1L377.2 187L377.7 183.7L379 190.8L379.7 195.4L380.6 195.4L382 196.9L383.2 195.2L384 210.3L385 194.9L386 196.9L386.6 192.8L388 196.6L388.7 194.7L389.2 195.7L390 197.8L391 202.5L391.7 206.2L392.6 209.4L393.1 209.4L394 216L395.2 203.5L396 203.8L396.9 210.8L397.7 213.4L399 215.5L399.5 216.1L400 226.7L401.2 223.9L402 224.4L403 225.3L404 226.4L404.6 226L405.5 228.3L406.3 230.7L407.2 229.4L408 227.2L408.9 226.3L410 229.2L411 228.9L411.5 231.3L412 231.9L413 231.5L414 232L415 232.3L415.8 232.3L417 232.2L418 232.4L419.2 232.3L420 233.3L421 233L422 234.1L423 232.7L423.5 230.5L424 231.4L425 233.1L426.1 233.2L427 232.8L428 231.8L429 231.7L430 230.4L431 229.4L432 231L433 232L434 229.5L435 232.4L436 229.7L436.7 228.9L438 230.1L439 230.9L440 231.4L441 232.3L442 232.7L443 232.8L443.6 233.2L445 233.1L446 232.6L447 232.6L448 232.3L449 232.9L450 232.1L451 232.3L452 231L453 231.7L454 233.3L455 231.3L455.6 230.6L457 232.2L458 230.2L459 230.7L460 229.5L461 228.4L462 228.8L463 228.6L464 228L465 227.2L466 227.5L467 227.1L468 226.1L469 225.4L470 226.5L471 224.8L471.9 225.2L473 225.9L474 226.1L475 226L476 227L477 229.4L478 226.5L478.7 225.3L480 224.9L481 226.6L482 227.8L483 227.8L484 227.8L485 229.3L485.6 229L487 228.9L488 228.6L489 229L490 228.8L490.7 228.2L492 231.2L493 227.2L494 225.5L495 228.1L496 224.7L497 225.1L498.4 223.9L499 224.1L500 225.7L501 225.8L502 224.7L503 224.7L504.4 225.3L505 225.6L506 226.2L507 226.2L508 225L509 225.9L510 223.2L511.3 224.7L512 224.8L513 224.7L514 222.3L515 222.8L516 226.8L517 221.5L518 222.9L519 220.4L519.9 219L521 220.8L522 225.5L523 220.4L524 221.1L525 221.3L526 221.8L527 222L528 219.4L529 223.5L530.1 222.8L531 220L532 224L533 220.3L534.4 217.5L535 218.5L536 209.1L537 207.4L538 205.9L539 203.2L539.6 200.2L541 200.1L542 202.7L543 203.7L543.9 205.1L545 201.8L546 198.9L547 201.7L548.1 196.7L549 199.1L550 197.6L551 196.9L552 200L553 196.5L554.1 197.2L555 198.3L556 206.1L557 198.4L558 197.1L559.3 193.5L560 194.5L561 195.2L562 196.5L563 191.9L564.4 194.9L565 207.4L566 206.4L567 193.1L568 193.3L569 194.7L569.6 190.6L571 207.1L572.1 206.9L573 203.5L574 197.6L575 197.6L576.4 196.2L577 209.6L578 196.5L579 206.4L580 195.4L581 193.3L582 208.8L583.3 195.4L584 195L585 192.6L586 194.5L587 186.6L587.6 190.3L589 205.2L590 194.9L591 194.4L591.9 195.7L593 199.5L594 199.1L595 207L596 196.6L597 191.8L598 206.5L599 203.2L600 198.3L601 198.5L602.1 198.5L603 202.9L604 200.9L605 195.5L606 200.2L607.3 199.1L608 201.1L609 201.3L610 200.1L610.7 198.1L612 193.9L613 195.5L614 195.5L615 192L615.9 188.5L617.4 188.9L618 212.4L618.8 201.3L620 229.2L621 232.3L621.9 234.8L623 235.6L624 236.4L625 237.1L626 237.7L627 237.7L628 237.7L629 237.7L630 237.7L631 237.7L632 237.7L633 237.7L634 237.7L634.7 237.7L636.4 222.7L637 219.2L638 213.6L639 205.5L640 204.4L641 213.2L642 208.3L643.3 200.1L644 205.4L645 212.7L646 218.4L646.7 221.8L648 225.4L649.3 228.8L650 226L651 222.5L652 218.5L652.7 213.8L654 217L655.3 222.5L656 219.6L657 213.2L658 210.3L659 208L659.6 203.4L661 202.2L662 200.6L663 202L664 200.7L664.7 197.4L666 209L667 211.5L668 214.8L669 218.6L670 220.5L671 212L672 216.9L673.3 202.2L674 206L675 207L676 206.5L677 204.9L678 202.5L679.3 198.4L680 210.9L681 201.4L682 214.3L683 204.4L683.6 205.9L685 209.7L686 210.6L687 214.5L687.9 208.2L689 209.6L690 212.2L691 220.3L692.1 211.5L693 210L693.9 203.5L695 202.3L696 199.7L697 194.9L698.1 194L699 208.1L700 221.9L700.7 223.4L702 218.6L703.3 213.1L704 215.3L705 220.5L706 222.1L706.7 223.4L708 216.8L709 223.6L710 214.7L711 206.7L712 217.1L713 220.6L714.4 229.7L715 225.8L716 213.2L717 202.5L717.9 194.5L719 199.9L720 206.4L721.3 211.9L722 212.3L723 208.8L724 208.3L725 204.8L725.6 200.3L727 209.5L728.1 211.4L729 207.1L730 213.5L731 202.6L732 201.3L733.3 192L734 192.6L735 210.4L736 199.4L736.7 198.5L738 202L739 197.3L740 196.7L741 193.1L742 202.1L743 211.7L743.6 214.8L745 218.6L746.1 220.1L747 215L748 204.7L748.7 198.4L750 201L751 204.6L752 206.4L753 208L754 207.6L755 208.1L756 201.5L757 198.7L758.1 194.2L759 197.7L760 198L761 203.3L762.4 202.4L763 202.5L764 205L765 209.1L766 207.3L767 208.2L768.4 208.5L769 206.7L770 215.4L771 221.2L772 222L773 225.7L773.6 226.8L775 219.1L776.1 205.5L777 201L778 197.2L778.7 189.4L780 207.9L781.3 206.8L782 201.1L783 202.7L784 185.7L785 182.4L785.6 186.2L787 201.8L788.1 212.7L789 204.6L790 200.2L791 196L791.6 182.7L793.3 216.3L794 212.3L795 205.6L795.9 197.5L797 193.5L798.4 193L799 207.8L800 195.2L801 191.8L801.9 191.6L803 195.1L804 193.1L805 204.9L806 185.3L807 190.2L808 188.9L809 194L810.4 193.8L811 196.5L812 195L813 190.7L814 206.5L814.7 217.2L816 217.5L817 196.4L818.1 194.5L819 201.5L820 208L820.7 209.5L822 214.9L823 216.8L824.1 221.3L825 225.6L826 217.4L827 218.6L828.4 214.9L829 216.2L830 219.9L831 213.8L832 213.3L832.7 212.6L834 222.1L835 221.1L836 223.4L837 227.5L838 228L839 230.6L840 231.9L841 233.1L842.1 233.9L843 235L843.9 235.6L845 221.9L845.9 211.1L847 215.1L848.1 217.5L849 215.1L850 218L851 211.3L851.6 206.8L853 214.5L854.1 206.8L855 208.9L856 222L856.7 227.2L858 229.8L859 233.5L860.1 234.8L861 235.4L862 235.5L863 236.1L864 236.5L865 237L866 237.4L867 237.7L868 237.7L869 237.7L870 237.7L871 237.7L872 237.7L873 237.7L874 237.7L874.7 237.7L874.7 238.7L874 238.7L873 238.7L872 238.7L871 238.7L870 238.7L869 238.8L868 238.8L867 238.9L866 239.2L865 239.7L864 239.9L863 240.4L862 240.8L861 241.3L860.1 241.5L859 242.9L858 243.8L856.7 245.8L856 244.8L855 246.5L854.1 252.1L853 252.5L851.6 254.4L851 254.2L850 255.3L849 256.4L848.1 257.2L847 262L845.9 266.2L845 256.4L843.9 240.8L843 241.4L842.1 242.5L841 245.3L840 243.9L839 246L838 247.6L837 249.1L836 247.6L835 255.3L834 260.4L832.7 265.8L832 263.2L831 262.9L830 261.9L829 259L828.4 257.8L827 255L826 253.4L825 253.2L824.1 252.1L823 254.3L822 257.9L820.7 262.1L820 266.1L819 272.5L818.1 281.8L817 272.2L816 264.1L814.7 254.3L814 267.4L813 284.7L812 281.2L811 269.3L810.4 274.5L809 276.9L808 266.1L807 282.5L806 271.8L805 265.3L804 262.2L803 257.9L801.9 262.7L801 263.3L800 269.2L799 273L798.4 277L797 267.9L795.9 278.5L795 271.9L794 263.9L793.3 259.7L791.6 294.7L791 292.3L790 267.7L789 267.2L788.1 267.8L787 273.9L785.6 287.4L785 282.4L784 276.3L783 265L782 265.9L781.3 261.6L780 264.3L778.7 269L778 270.6L777 274L776.1 275.2L775 263.1L773.6 248.8L773 250.9L772 253.9L771 253.5L770 254.8L769 263.3L768.4 266.1L767 266.9L766 265.8L765 255L764 262.5L763 265L762.4 263.7L761 266.3L760 259L759 264.2L758.1 275.7L757 270.8L756 266.2L755 254.2L754 253L753 254.6L752 261.1L751 261.1L750 268.1L748.7 270.1L748 264.2L747 263.1L746.1 259.7L745 256.2L743.6 255.7L743 259.2L742 263.4L741 271.5L740 271.5L739 271L738 273.3L736.7 271.3L736 272.3L735 279.5L734 290.2L733.3 285.1L732 278.4L731 269.8L730 257.4L729 255L728.1 252.5L727 265.3L725.6 281.9L725 269.7L724 274.9L723 269.7L722 262.7L721.3 261.2L720 268.4L719 267.9L717.9 272.2L717 266.3L716 258L715 249.4L714.4 245L713 251.9L712 258.1L711 264.2L710 261.9L709 257.8L708 256.8L706.7 250.4L706 249L705 253L704 250.2L703.3 256.4L702 249.6L700.7 249.4L700 254.6L699 265.3L698.1 276L697 273.3L696 268.1L695 261.3L693.9 259.8L693 261.4L692.1 262.7L691 260.6L690 252.8L689 252.2L687.9 254.2L687 256.5L686 258.6L685 260L683.6 266.1L683 266L682 256.3L681 265.9L680 264.8L679.3 264.8L678 262.7L677 260.7L676 263L675 261.4L674 264.3L673.3 267.5L672 262.8L671 256.7L670 260.9L669 259.2L668 261.2L667 255.9L666 262.4L664.7 262.7L664 261.7L663 262.3L662 262.5L661 257.7L659.6 264.5L659 263L658 262.2L657 258.8L656 258.6L655.3 258.8L654 261.4L652.7 261.2L652 258.6L651 255.5L650 251.8L649.3 251.4L648 252.9L646.7 254.4L646 256.4L645 256.8L644 256.7L643.3 262.7L642 260.7L641 254.3L640 263.6L639 259.9L638 256.5L637 253.4L636.4 252.8L634.7 238.9L634 238.8L633 238.8L632 238.9L631 238.8L630 238.8L629 238.9L628 238.9L627 238.9L626 238.9L625 239.5L624 240.2L623 240.8L621.9 241.5L621 244.5L620 247.3L618.8 275.3L618 271.3L617.4 284.4L615.9 286.7L615 287.2L614 280.4L613 279.9L612 279.7L610.7 281L610 279.4L609 274.8L608 270.5L607.3 272.5L606 275.2L605 267.7L604 275.7L603 277.8L602.1 279.4L601 277.2L600 279.5L599 279.1L598 280.3L597 280.4L596 278.8L595 272.6L594 278.9L593 277.3L591.9 276.3L591 274.9L590 276.2L589 278.5L587.6 277.9L587 275.4L586 280.7L585 276.4L584 277.9L583.3 278L582 283.5L581 277.1L580 275.5L579 265.5L578 280.4L577 280.9L576.4 281L575 279.4L574 281L573 275.1L572.1 277.5L571 280.9L569.6 289.3L569 285.1L568 296.2L567 266.1L566 279.3L565 284.6L564.4 279.8L563 281.9L562 285L561 277.8L560 277.9L559.3 280L558 278.7L557 275.3L556 269.3L555 277.1L554.1 274.8L553 270.2L552 276.7L551 277.6L550 287.6L549 283.4L548.1 283.5L547 279.1L546 268.7L545 270.9L543.9 274.9L543 273.3L542 271.1L541 267.9L539.6 269.9L539 267.4L538 267.1L537 264L536 253.7L535 262L534.4 260.6L533 258.3L532 263.6L531 261.4L530.1 260.8L529 264.1L528 258.7L527 257.4L526 257.6L525 257L524 256.8L523 256.6L522 255L521 255.9L519.9 256L519 253.5L518 254.4L517 254.1L516 254.2L515 249.6L514 252.6L513 252.5L512 254L511.3 251.7L510 246.6L509 251.7L508 252.2L507 250.4L506 250.3L505 250.4L504.4 251.2L503 251.2L502 250.5L501 254.4L500 250.6L499 247.8L498.4 251.6L497 251.8L496 251.8L495 252.7L494 251.6L493 251.3L492 251.8L490.7 253.1L490 251.5L489 251.8L488 251.3L487 247.8L485.6 250L485 250.1L484 247.7L483 249.9L482 250.4L481 247.2L480 247.7L478.7 249.4L478 244.8L477 248.3L476 245L475 246L474 249.2L473 248.7L471.9 249.3L471 248.9L470 249.1L469 248.3L468 248.5L467 248.3L466 250.1L465 248.5L464 245.6L463 247.9L462 248.7L461 247.2L460 247.6L459 244.1L458 247.7L457 245.1L455.6 246.9L455 246.6L454 246.5L453 246L452 245L451 245.8L450 246.1L449 244.9L448 242.6L447 244.5L446 244.5L445 244.4L443.6 244.1L443 244.1L442 244.6L441 244.1L440 245.8L439 243.6L438 245.5L436.7 245.8L436 245.9L435 246.3L434 244.9L433 245.2L432 244.6L431 244.7L430 244.3L429 244.5L428 245.1L427 245.5L426.1 246.3L425 244.3L424 243.2L423.5 243.4L423 243.3L422 242.4L421 244.9L420 245.9L419.2 246.6L418 246.4L417 245.5L415.8 245.2L415 245.4L414 245.1L413 245.1L412 245.5L411.5 246.2L411 246L410 244.6L408.9 247.7L408 248.5L407.2 249.3L406.3 246.7L405.5 244L404.6 246L404 247L403 249L402 250.5L401.2 252.6L400 261.2L399.5 267.3L399 265.4L397.7 262.5L396.9 264.1L396 264.6L395.2 267.4L394 271.9L393.1 267.1L392.6 264.6L391.7 269.3L391 264.1L390 278.1L389.2 281.7L388.7 283.5L388 286.7L386.6 282.1L386 281.7L385 268.4L384 283.4L383.2 281.6L382 269.9L380.6 283.2L379.7 272.4L379 274.1L377.7 280L377.2 281.5L376 270.2L374.9 277.9L373.7 286.8L373 282.6L372 283.1L371 282.3L370.3 282.4L369.1 268.8L368 270L366.9 278.7L366 278.8L365.2 282.6L364.3 281.5L362.6 279.4L361.7 264.6L361 264.7L360 270.8L359 261.3L358.3 275.2L357.4 281L355.7 287.4L354.9 285.3L354 281.7L352.8 274.6L352 279.9L351.4 279.9L349.7 271.7L348.9 272.2L348 274.9L347.2 274.1L346.3 271.7L344.6 264.7L344 259.1L342.9 251.6L342 252.4L341 252L340.3 252.8L339 249.6L337.7 253.9L337 264.3L336.5 268L336 273.2L334.8 281.9L334.3 286.9L332.6 284.6L331.7 281.6L331 277.2L330 274.2L329 265.2L328 275L327 275.1L326.1 274.7L325 261.6L324 270.8L323 262.1L322 259.7L321 262.5L320.1 261.9L319 259L318 256.3L317 255.3L316 251.6L315 249.3L314 248L313 250.3L312 246.5L311 252.2L309.9 252.8L309 253.3L308 249.5L307 248.3L306 246.1L304.7 244.2L304 247L303 252.7L302 256.5L301.3 259.9L300 259.7L299 261.1L297.9 264.9L297 261.7L296 257L295 259.7L294.4 257.6L293 253L292 250.6L291 258.6L290.1 259L289 253.1L288 253.3L286.7 249L286 251.8L285 250.3L284 257.5L283 259L282.4 260.6L281 261.4L280 261.2L279 260.4L278 254.5L277.3 261.9L276 259.1L275 262.4L274 260.6L273 260.6L272.1 261.7L271 261.2L270 260.8L269 261.8L268 261.5L267 260.3L266.1 263.2L265 252.6L264 260.1L263 257.8L262 254.2L261 254.6L260.1 255.2L259 250.4L258 255L257 252.5L256 252.5L255 252.7L254 256L253 257.2L251.6 261.9L251 254.6L250 259.3L249 259.9L248 258.4L247 257.1L246 256.9L245 254.2L244 254.8L243 249.9L242.1 252.9L241 251.3L240 250.7L239 250L238 249.7L237 250L236 245.3L235 247.5L233.6 247.7L233 247.9L232 247.4L231 250.2L230 251.5L229 251.9L228 249.5L226.7 253.8L226 247.6L225 252.6L224 248.7L223 250.3L221.6 249.2L221 248.9L220 249.8L219 251.2L218 251.2L217 251.4L216 252L214.7 252.7L214 253.8L213 255.9L212 262.1L211 260.9L210 260L209 262L208 263.8L207 269.4L206 264.8L205 263.1L204 263.1L203 261.2L202 258.4L201 252.2L200 255.2L199.3 254.1L198 252.2L197 249.1L196 251L195 251.1L194 249.6L193 246.6L192.4 249.4L191 248.5L190 253.6L189 251.2L188 253.7L187 255.9L186 258.8L185 257.2L183.9 260L183 256.6L182 253.7L181 254.5L180 253.7L179 251.5L178 251.4L177 248.7L176 247.8L175 247.3L173.6 244.1L173 245.3L172 247.5L171 250.5L170 253.7L169 254.9L168 258.5L167 260.7L165.9 264.8L165 262.4L164 256.6L163 258.9L162 258.9L161 258.1L160 257.3L159 255.3L158 254.1L157 252.2L156.4 252.4L155 252.9L154 253.9L153 253.1L152 253.1L151 254.3L149.6 256L149 254.6L148 250.3L147 256.9L146 256.9L145 256L143.6 257.6L143 258.1L142 253L141 253.1L140 254.1L139 253.4L137.6 252.9L137 251.2L136 250.2L135 248.8L134 249.9L133 248.3L132.4 247.5L131 253.7L130 253.7L129 261.8L128.1 266.9L127 264.6L126 258.6L125 264.2L124 265.5L123 264L122 263.6L121.3 264.4L120 262.1L119 258.5L118 260.3L117 254.6L116 253.2L115 249L113.6 249.2L113 246.8L112 251.1L111 252.2L110 255.1L109 253.8L108 256.5L106.7 259.6L106 252.1L105 257L104 257.7L103 254.6L102 255.7L101 256.2L99.9 255.8L99 252.4L98 249.7L97 253.4L96 253.1L95 250.6L94 251.7L93 250.8L92 252.7L91 254.2L90 255.8L89 256.7L87.9 259.4L87 259.1L86 257L85 257.6L84 252.7L83 255.4L82 255L81 254.9L80 255.4L79.3 256L78 254.5L77 253.9L76 252.8L75 252.1L74 252L73 248.8L72 250.6L70.7 249.1L70 252.1L69 253.1L68 253.1L67 254.6L66 257.6L65 261.8L64 261.1L63 263.7L62 256.1L61 256.9L60 253.4L59 251.3L58 256.7L57 255.2L56 254.1L55 252.5L53.6 251.5L53 252.1L52 253.1L51 250.5L50 249.8L49 248.7L48 248.6L47 248L46 247.7L45 247.4Z" fill="#ffdc6e"/>
<path clip-path="url(#c2)" d="M45 352.2L46 352.3L47 351.9L48 351.3L49 350.9L50 350.8L51 350L52 349.7L53 349.7L53.6 348.2L55 346.4L56 347L57 352.3L58 346.9L59 353L60 345L61 345.2L62 345.4L63 344.2L64 346.1L65 345.3L66 345.5L67.3 346.7L68 348.1L69 350L70 350.6L71 351.2L71.6 352.9L73 354.9L74 354.5L75 351.8L76 351.5L77 354.8L78 351.3L79.3 349.3L80 348.5L81 347.6L82 343.6L83 349.2L84 344.1L85 343.4L86 347.3L87 348.4L87.9 338.2L89 347.2L90 344.3L91 346.7L92 347.7L93 349.6L94 349.7L95 349.9L96 347.6L97 350.1L98 347.4L99 345.5L99.9 343.8L101 345.6L102 342.5L103 342.7L104 343.5L105 343.5L106 343.4L107 347.5L108.4 341.3L109 344L110 345.3L111 346.8L112 353.3L113 350.6L113.6 350.9L115 349.3L116 348.6L117 351.8L118 347L119 348.7L120 343.6L121.3 339.5L122 342.2L123 338.6L124 338.2L125 337.3L126 337.6L127 337.3L128 330.6L129 334.8L130 344.8L131 341.1L132 347.8L133.3 353.2L134 352.3L135 352L136 351.9L137 351.2L137.6 349.2L139 348.4L140 347.6L141 347.7L142 343.1L143 343.7L143.6 343.7L145 347.3L146 345.8L147 345.4L148 347.2L149 348.2L149.6 348L151 348L152 346.7L153 350.1L154 347.4L154.7 344.6L156 346L157 346.1L158 343.6L159 346.8L160 351.4L161 346.9L162 353.1L163.3 348.1L164 347.5L165 349.2L166 343L166.7 341.1L168 345L169 341.8L170 341L171 340.5L172 347.1L173 352.5L173.6 356.3L175 354.9L176 356L177 352.2L178 352.2L179 351L180 349.9L181 348.1L182 346.5L183 349L183.9 344.9L185 345.5L186 347.7L187 347.9L188 350.3L189 350.8L190 351.4L191 352.9L191.6 353L193 352.2L194 351.2L195 350.6L196 349.6L197 349L198 350.7L199.3 348L200 346.4L201 344.4L202 340L203 339.8L204 338.9L205.3 333.6L206 340.1L207 343.4L207.9 342.6L209 341.5L210 337.6L210.9 333.7L212 338.5L213 341.5L214 345.8L214.7 349.4L216 350L217 351.4L218 350L219 352.3L220 348.8L221 348.4L221.6 348.1L223 350.3L224 344.5L225 342.8L226 348L226.7 341.1L228 343.7L229 347.5L230 346L231 345.5L232 347.9L233 349.5L233.6 349.9L235 349.4L236 349.7L237 349.4L238 348.1L239 348.6L240.4 347.8L241 347.4L242 345.8L243 345.8L244 346.7L245 345.5L246 343.6L247 343L248.1 341.7L249 342.2L250 343.6L251 341.1L252 351.2L253 346L254 347.9L255 348L256 346.4L257 349.8L258 343.7L259 346.7L260.1 344.4L261 343.1L262 343.9L263 347.5L264 341.3L265 340.9L266.1 337.3L267 344L268 341.4L269 339.5L270 338.7L271 339.2L272.1 337.2L273 337.9L274 339.8L275 338.4L276 343.4L277.3 338.8L278 346.3L279 337.3L280 336L281 335L282.4 332.2L283 343.1L284 336.5L285 340.6L286 343.4L286.7 344.2L288 342.2L289 342L290.1 339.4L291 346.3L292 344.9L293 337.5L294 338.5L295.3 338.3L296 343.9L297 344.1L298 331.8L298.7 327.7L300 343L301 342.1L302.1 349.2L303 352.6L304 350.9L305 352.3L305.6 352.8L307 352.7L308 350.2L309 349.7L309.9 347.6L311 351.8L312 350.2L313 351.1L314 353.7L315 352.3L316 351.7L317 348.5L318 345.6L319 341.6L320.1 339.5L321 341.1L322 340.3L323 339L324 338.2L325 336.8L326.1 334L327 332.7L328 330.4L329 331.6L330 330L331.3 325.8L332 330.6L333 320L334 321.8L335 317.9L335.6 314.5L336.9 343.6L338.1 344.4L339 344.5L340 345.7L341 346.4L342.4 347.8L343 353.2L343.8 346.9L344.8 321.2L345.9 317L347 318.8L348 328.8L349 320.9L350.1 321.4L351 323.4L352 321.5L353 316.4L354 313.7L355.3 319.3L356 329.1L357 327.7L358 332.4L359 322.1L360 328.7L361.3 329.8L362 333.8L363 328.6L364 323.8L365 332.8L366.4 315.4L367 326.1L368 318.4L369 318.2L370 318.2L371 317.8L372.4 315.6L373 317.8L374 330.9L375 318.1L376 328.1L377 320.3L377.6 318.1L379 324.1L380 319.9L381 328.5L381.9 327.6L383 325.4L384 324.9L385 322.8L386 335.7L387 318.2L387.9 318L389 330.7L390 325.7L391 329L392.1 333.3L393 333.8L394 337.3L395 335.2L395.6 337.3L397 341.7L398 344.6L399 345.2L400 350.2L400.7 349.6L402 353.2L403 351.6L404 353.2L405 354.4L405.9 354.4L407 354.8L408 355L409 355L410 356.4L411 356.7L412 355.5L413 355.5L414.4 355.5L415 355.8L416 355.5L417 356L418 358.3L419 356.5L420 356.7L421 356.4L422 357L423 356.8L424 357.2L424.7 357.1L426 359L427 356.5L428 357.3L429 356.8L430 356.7L431 356.9L432 356.5L433 356.9L434 356.5L435 356.6L436 356.4L436.7 356.2L438 356.7L439 358.5L440 357L441 356.9L442 356.7L443 356.9L443.6 357.3L445 357L446 357.1L447 356.5L448 356.2L449 356.3L450 357.2L451 356.1L452 355.9L453 355.8L454 357.8L455 355.3L455.6 355.4L457 355.4L458 355.1L459 358L460 355.1L461 355L462 354.3L463 355.4L464 354.7L465 354.5L466 355L467 354.8L468 352.9L469 354.5L470 355.7L471 353.9L471.9 354.1L473 355.7L474 357.3L475 354.6L476 353.6L477 356.8L478 356.4L478.7 353.7L480 354.2L481 353.7L482 354.9L483 357.2L484 356.8L485 354.6L485.6 354.7L487 356.1L488 356.8L489 356.1L490 354.3L491 353.9L492.4 353.7L493 357L494 353.4L495 353.1L496 351.3L497 354.9L498.4 351.7L499 354.9L500 350.5L501 354.1L502 348.8L502.7 348.5L504 352.9L505 351.1L506 350.1L507 350.9L508 352.2L509 351.8L510 352.1L511.3 352.9L512 355.9L513 355.6L514 350.8L515 350.8L516 349.6L517 348.4L518 348.7L519 347.3L519.9 346.9L521 348.3L522 348.5L523 352.5L524 350.2L525 349.2L526 350.3L527 348.7L528 349.7L529 347.6L530.1 348.9L531 350.6L532 347L533 345.4L534.4 341.6L535 344.3L536 344.5L537 341.4L538 336.8L539 333.7L539.6 336.9L541 336.4L542 336.3L543 336.2L544 332.2L544.7 336.9L546 332.7L547 324.1L548.1 314.6L549 321L550 327.6L550.7 329.4L552 325.5L553 322.9L554.1 320.4L555 320.3L556 332.3L557 321.3L558 317.3L559 317.7L560.1 315.8L561 319.9L562 322.1L563 338.6L564.4 327L565 327.4L566 325.3L567 323.2L568 322.9L569 314.3L570.4 313.1L571 308.8L572 318.8L573 315.4L574 316.9L575 317.2L576.4 318.8L577 323.4L578 321L579 322.8L580 317.3L581 324.8L581.6 323.5L583 323L584 323.1L585 321L586 323.8L587 327.9L587.6 317.6L589 318.5L590 325.6L591 315.9L592 319L592.7 316.8L594 315.3L595 316.2L596 316.9L597 317.8L597.9 312.9L599 318.7L600 318.6L601 332.5L602 323.9L603 324.3L604 329.5L605 322.6L606 319.8L607 316.7L608 327.3L609 312.1L610 312.8L611 316.2L612 317.9L613.3 321.8L614 320.5L615 319L616 329.8L617.4 309.8L618 313.6L618.8 323.5L620 352.8L621 355.9L621.9 358.9L623 359.6L624 360.4L625 361.1L626 361.7L627 361.7L628 361.7L629 361.7L630 361.7L631 361.7L632 361.7L633 361.7L634 361.7L634.7 361.7L636.4 349.4L637 350.7L638 345.2L639 338.5L639.9 324.3L641 327.5L642 328.3L643 335.2L644.1 328.5L645 333.5L646 337.6L647 339.7L648 347.9L649.3 351.9L650 347.9L651 341L652 338L652.7 332.3L654 337.6L655.3 347.6L656 347.3L657 345.3L658 334L659 328.1L659.6 325.3L661 327.9L662 328L663 338.8L664 327.5L664.7 326.3L666 328.3L667 333.6L668 337.8L669 341.4L670 339L671 341.3L672 341L673.3 325L674 328.3L675 328.9L676 326.1L677 325.4L678.4 320.6L679 323L680 326L681 329.7L681.9 327.7L683 332.2L684 324.9L685.3 321.8L686 324.6L687 327.4L688 325.6L689 335L689.6 334.1L691 339.7L692 340.2L693 345L694 340.1L694.7 332.9L696 330.3L697 327.6L698.1 326.1L699 338.6L700 342.4L700.7 345L702.4 329L703 328.5L704 338L705 348.6L705.9 349L707 346.7L708 347.8L709 341.8L710 337.8L711 334.8L712 343.9L713 347.8L714.4 350.9L715 345.6L716 333.5L717 338.1L717.9 318.7L719 326.6L720 330.3L721.3 336.2L722 335.7L723 329.4L724 329.2L725 331L725.6 322.6L727 328.7L728 321.8L729 330.3L730 329.9L731 337.3L732 327.4L733 338.5L734.1 323.7L735 317.8L736.4 314.6L737 310.8L738 313.2L739 317.4L740 315.9L741 321L742 326.1L743 331.5L743.6 336.7L745 345.6L745.8 349.3L747 335.8L748.4 318L749 328L750 325.5L751 327.3L752 336.8L753 334.1L754 330L755 327.6L755.6 322.6L757 321.9L758 318L759 306L759.9 315.4L761 325.6L762 324.5L763.3 338.3L764 337.2L765 337.5L766 346.7L767 336.2L768.4 336.4L769 340.6L770 341.7L771 344.9L772 348.9L773 354.4L773.6 354.5L775 335.6L776.1 324.1L777 323.4L778 315.8L778.7 318.4L780 322.7L781 326.7L782 327.5L783 329L784 326.1L785 323.2L786.4 318L787 320.8L788 326.6L789 329.4L790 322.8L791 315L791.6 309L793.3 335L794 342.6L795 328.8L796 324.1L797 326.5L797.6 313.6L799 317.8L800 319.7L801 320.3L801.9 323.2L803 327.2L804 319.2L805 330.2L806.1 310.7L807 313.1L808 313.2L809 310.1L809.6 310.3L811 324.1L812 312.7L813 312.1L814 329.7L815.2 346.4L816 337.1L817 323.1L817.8 310.9L819 312.7L820 329.1L820.7 329.2L822 333.5L823 339.2L824 342.1L825 343.6L826 347.5L827 340.4L828 340.5L829.3 337.6L830 332.2L831 335.4L832 336.8L833 333.6L833.6 334.5L835 339.5L836 344.7L837 348.3L837.9 350.6L839 354.7L840 353.9L841 356.9L842.1 358.8L843 360L843.9 359.6L845 349.2L845.9 340.4L847 338L848 340.8L849 339.4L849.9 337.1L851 337.9L852 338.2L853 336.3L854.1 335.6L855 343L856 345.9L856.7 352.8L858 355L859 356.1L860.1 357.9L861 357.8L862 358.9L863 359.5L864 360.4L865 360.7L866 361.4L867 361.7L868 361.7L869 361.7L870 361.7L871 361.7L872 361.7L873 361.7L874 361.7L874.7 361.7L874.7 362.7L874 362.7L873 362.7L872 362.7L871 362.7L870 362.7L869 362.8L868 362.8L867 362.9L866 363.4L865 363.9L864 364.2L863 364.7L862 365.4L861 366.5L860.1 366.5L859 367.5L858 368.5L856.7 369.9L856 368.4L855 370.4L854.1 375.9L853 376.6L852 376.8L851 379.6L849.9 378.2L849 376.7L848 375.2L847 382.1L845.9 382.7L845 371.6L843.9 364.8L843 365L842.1 365.6L841 365.7L840 368.2L839 371.6L837.9 371.5L837 373.2L836 376.5L835 380.6L833.6 384.4L833 387.4L832 385.3L831 386.8L830 386.4L829.3 387.2L828 385.6L827 383.9L826 375.2L825 378.8L824 377.2L823 382.6L822 382.4L820.7 387.8L820 393.9L819 398.8L817.8 409.2L817 396.2L816 387.4L815.2 378.4L814 383L813 409.9L812 407.4L811 401.9L809.6 399.5L809 400.7L808 403.5L807 399L806.1 411.3L805 403.1L804 397.5L803 387L801.9 387.3L801 389.9L800 392.7L799 402.5L797.6 404L797 398.9L796 399.2L795 389.6L794 389.8L793.3 390.4L791.6 416.8L791 397.5L790 403.3L789 397.4L788 396.5L787 401.1L786.4 402.9L785 391.1L784 391.6L783 387.2L782 387.2L781 391.4L780 390.1L778.7 394.9L778 395.4L777 395.3L776.1 400.3L775 387.4L773.6 371.6L773 369.9L772 371.3L771 377.5L770 380.7L769 381.6L768.4 384.9L767 384.3L766 383.5L765 382.1L764 382.9L763.3 383.9L762 383.1L761 387.1L759.9 399.6L759 398.2L758 396L757 392.1L755.6 393.2L755 389.2L754 377.9L753 383.5L752 384.2L751 389L750 389.2L749 392.4L748.4 394.3L747 380.7L745.8 385.1L745 381.2L743.6 378.4L743 374.7L742 383.5L741 396.8L740 396.7L739 394.4L738 394.4L737 394.6L736.4 393.6L735 398.7L734.1 401.2L733 399L732 390.1L731 389.3L730 380.8L729 380.1L728 377.7L727 392.9L725.6 401.5L725 397.8L724 393L723 391.3L722 387.6L721.3 384.9L720 388.7L719 391.1L717.9 395.8L717 390.2L716 379.5L715 373.5L714.4 369.8L713 382.2L712 380.6L711 397.3L710 393.5L709 392.1L708 386.3L707 382.2L705.9 379.5L705 380.9L704 381.6L703 378.4L702.4 385.6L700.7 375.3L700 381.1L699 395.7L698.1 400.1L697 391.3L696 386.8L694.7 375.2L694 380.9L693 388.8L692 384.9L691 377.7L689.6 380.4L689 377L688 384.8L687 386.7L686 391.8L685.3 393.8L684 381.9L683 388L681.9 387L681 387L680 385.3L679 392.4L678.4 393.1L677 386.1L676 386.2L675 383.4L674 387.8L673.3 393.9L672 387.4L671 380.9L670 385.8L669 385.5L668 385.7L667 386.7L666 387.3L664.7 389L664 392.2L663 390.6L662 391L661 389.6L659.6 390.8L659 388.2L658 386L657 383.4L656 376.5L655.3 377.9L654 377L652.7 386.6L652 385.7L651 379.4L650 374.6L649.3 371.7L648 375.3L647 377.8L646 380.9L645 383.2L644.1 386.5L643 385.6L642 379L641 383.5L639.9 382.9L639 381.4L638 373.7L637 374.6L636.4 373.6L634.7 362.9L634 362.9L633 362.9L632 362.9L631 362.9L630 362.9L629 362.9L628 362.9L627 362.9L626 362.9L625 363.4L624 364.2L623 364.8L621.9 365.5L621 368.2L620 371.4L618.8 398.2L618 397.9L617.4 410.4L616 417L615 393.3L614 409.3L613.3 408.6L612 407.1L611 411.6L610 391.9L609 399.1L608 399L607 401.2L606 402.5L605 402.6L604 395.6L603 406.8L602 405.5L601 401.9L600 407.9L599 403.5L597.9 403.5L597 402L596 396.9L595 391.1L594 413L592.7 411.3L592 409.3L591 394.8L590 409.1L589 404.4L587.6 404.5L587 389.6L586 401.9L585 403L584 398.6L583 398.4L581.6 398.2L581 403L580 399.9L579 400.4L578 394.9L577 403.6L576.4 405.5L575 400.9L574 405.4L573 409.8L572 417.1L571 392L570.4 412.5L569 404.9L568 406.7L567 405.2L566 406.5L565 400.5L564.4 402.3L563 398.5L562 408.9L561 408.4L560.1 408.9L559 405.2L558 404L557 407.1L556 391.5L555 404.5L554.1 406.1L553 402.2L552 404L550.7 399.2L550 398.9L549 402.4L548.1 405.6L547 399.4L546 401.6L544.7 393.6L544 399L543 387.1L542 385.4L541 388.2L539.6 389.3L539 388.8L538 386.8L537 382.5L536 382.1L535 380.7L534.4 379.5L533 378.9L532 378.2L531 377.1L530.1 377.4L529 376.4L528 377L527 376.8L526 372.9L525 374.6L524 375L523 374.2L522 374.3L521 374.7L519.9 374.6L519 373.7L518 376.6L517 374.5L516 373.2L515 370.8L514 372.5L513 368.5L512 371.6L511.3 371.6L510 371.4L509 371.7L508 371.6L507 372.1L506 368.8L505 372.8L504 371.8L502.7 373.6L502 369.3L501 372.7L500 374.4L499 372.2L498.4 372.2L497 372L496 371.8L495 371.4L494 371.6L493 370.9L492.4 371.5L491 371.6L490 368.4L489 370.9L488 368.2L487 369.5L485.6 371L485 370.7L484 370.4L483 371.5L482 371.2L481 369.1L480 371L478.7 371.4L478 373.5L477 371.7L476 371.7L475 371.7L474 370.7L473 371.4L471.9 371.5L471 371.1L470 370.9L469 369.2L468 369.3L467 370.2L466 369.1L465 370.9L464 370.4L463 370L462 370.5L461 369.7L460 369.8L459 367.7L458 369.6L457 369.3L455.6 368.9L455 368.6L454 368.9L453 368.2L452 367.8L451 368.1L450 367.7L449 368.2L448 368.1L447 366L446 367.6L445 367.9L443.6 367.8L443 368L442 367.8L441 367.4L440 366.7L439 367.8L438 367.7L436.7 368.2L436 369L435 367.9L434 366.6L433 368.9L432 367.9L431 366.4L430 367.5L429 367.4L428 367.3L427 367.1L426 367L424.7 367.3L424 366.8L423 367.3L422 367.7L421 367.3L420 367L419 368.3L418 368.4L417 368.7L416 366.8L415 369L414.4 369L413 368.7L412 369.3L411 368.2L410 368.7L409 368.6L408 367.5L407 368.6L405.9 369.1L405 369.2L404 369.9L403 371.3L402 372.6L400.7 373.4L400 375.4L399 376.7L398 379.1L397 381.1L395.6 385.2L395 389L394 386.4L393 383.5L392.1 391.6L391 389.7L390 399.1L389 404.4L387.9 407L387 412.3L386 406L385 406L384 410.8L383 396.3L381.9 402L381 407.1L380 402.3L379 390.7L377.6 403.2L377 392L376 400.9L375 395L374 401.9L373 402.2L372.4 408.8L371 396.3L370 405.6L369 404.8L368 405.7L367 403.2L366.4 406L365 402.7L364 398.2L363 399.7L362 397.5L361.3 397.8L360 392.7L359 400.2L358 403.3L357 402.7L356 404.8L355.3 406L354 400.8L353 405.8L352 407.9L351 391.8L350.1 397.6L349 396L348 406.9L347 403.3L345.9 400.2L344.8 397.9L343.8 376.7L343 378L342.4 376.6L341 376L340 377.9L339 377.6L338.1 378.2L336.9 378.8L335.6 407.6L335 394.3L334 395.5L333 398.8L332 400.5L331.3 398.1L330 396.8L329 392.6L328 390.3L327 389.9L326.1 388.6L325 387.4L324 385.8L323 383.5L322 384.1L321 380.5L320.1 382.1L319 378.9L318 375.9L317 375.1L316 371.6L315 371.5L314 372.1L313 372.8L312 374.4L311 374.5L309.9 376.7L309 371.8L308 373.3L307 373.7L305.6 370.7L305 370.3L304 370.9L303 371.2L302.1 371.7L301 379.2L300 388.6L298.7 400.7L298 393.7L297 389L296 383.6L295.3 379.3L294 381.1L293 383.3L292 377L291 385.8L290.1 388.2L289 381.3L288 384.7L286.7 382L286 378.7L285 385.2L284 388.9L283 396.1L282.4 394.4L281 390.9L280 390.6L279 388.4L278 385L277.3 384.6L276 382.3L275 388L274 390.1L273 390L272.1 392.5L271 394.2L270 391.5L269 386.1L268 393.1L267 394L266.1 395.6L265 387L264 390.4L263 383.6L262 387.3L261 382.8L260.1 384.6L259 375.2L258 379.7L257 378.6L256 377.9L255 376.6L254 376.4L253 376.4L252 372.4L251 375.3L250 383.9L249 379.9L248.1 382.1L247 378.2L246 380.8L245 381.2L244 381.5L243 379.1L242 379.3L241 378L240.4 378.6L239 378.4L238 376.7L237 373.8L236 375.3L235 370.4L233.6 375L233 374.9L232 376.7L231 378.1L230 377L229 377.8L228 381.1L226.7 383.8L226 381.4L225 381.3L224 378.8L223 377.8L221.6 374.8L221 374L220 373.7L219 374.9L218 373.7L217 373.8L216 372.7L214.7 373.3L214 376.3L213 374.7L212 381.8L210.9 392.1L210 389.9L209 388.3L207.9 385.1L207 385.8L206 385.6L205.3 386.5L204 377.9L203 381.8L202 381.2L201 379.6L200 380.5L199.3 377L198 375.1L197 374.8L196 373.9L195 373.2L194 373L193 371.4L191.6 371.8L191 372.2L190 373.8L189 369.7L188 371.4L187 377.4L186 372.8L185 373.2L183.9 380.1L183 377.3L182 378.1L181 377.7L180 375.3L179 374.8L178 373.1L177 373.1L176 372.6L175 369L173.6 369.8L173 369.5L172 375.8L171 384.1L170 379.3L169 377.6L168 380.4L166.7 385.4L166 382.7L165 380.8L164 373.5L163.3 376.4L162 375.9L161 378L160 376L159 375.3L158 375.6L157 375.4L156 376.8L154.7 376.9L154 376.6L153 378.4L152 376.1L151 371.8L149.6 377.9L149 378.3L148 380.8L147 376.6L146 377.1L145 376.9L143.6 376.2L143 375.6L142 375.2L141 373.8L140 374L139 373.6L137.6 373.6L137 373L136 370.8L135 374.6L134 373.4L133.3 372.9L132 378.7L131 381.3L130 385.5L129 390.1L128 386.3L127 387L126 385.5L125 385.5L124 383.5L123 383.3L122 381.7L121.3 382.1L120 379.6L119 380.7L118 374.3L117 376.4L116 376.6L115 374.9L113.6 375L113 375.6L112 377.5L111 374.3L110 383.2L109 384.7L108.4 386.1L107 378.6L106 383.5L105 382.7L104 381.9L103 381.4L102 378.9L101 378.7L99.9 377.9L99 378.2L98 377.9L97 373.8L96 376.8L95 376.5L94 378.1L93 376.7L92 379.9L91 377.3L90 380.9L89 384L87.9 386.6L87 384L86 384.5L85 383.4L84 383.1L83 379.1L82 377.3L81 376L80 373.9L79.3 373.4L78 372.9L77 373.8L76 372.4L75 373L74 371.1L73 373.1L71.6 373.1L71 371L70 376.3L69 379.5L68 381.3L67.3 383L66 380.8L65 383L64 378.3L63 378.4L62 377.1L61 376L60 377.5L59 373.4L58 376.6L57 376.6L56 377.1L55 376.5L53.6 376.8L53 373.6L52 375.5L51 374.2L50 373.6L49 373.7L48 372.5L47 371.2L46 370.2L45 371.5Z" fill="#ffdc6e"/>
<rect x="629" y="180" width="1.2" height="241" fill="#2e8a5c"/>
<rect x="499" y="180" width="1.3" height="117" fill="#ff0000"/>
<rect x="499" y="304" width="1.3" height="117" fill="#ff0000"/>
</svg>
<svg class="a" style="left:494px;top:163px" width="10" height="16" viewBox="0 0 10 16"><path d="M0 0 H10 V12 L5 16 L0 12Z" fill="#d01018" fill-opacity=".8"/></svg>
<div class="t" style="left:49px;top:184px;font-size:10.5px;color:#fff">The Rise</div>
<div class="t" style="left:633px;top:184px;font-size:10.500px;color:#fff">The Fall</div>

<!-- scrollbar -->
<div class="a" style="left:45px;top:421.500px;width:831px;height:20.500px;background:#50535e"></div>
<div class="a" style="left:45px;top:421.500px;width:20px;height:20.500px;background:linear-gradient(#dadbdf,#a9aaae)"></div>
<div class="a" style="left:816px;top:421.500px;width:19px;height:20.500px;background:linear-gradient(#dadbdf,#a9aaae)"></div>
<div class="a" style="left:837px;top:421.500px;width:18px;height:20.500px;background:linear-gradient(#dadbdf,#a9aaae)"></div>
<div class="a" style="left:857px;top:421.500px;width:19px;height:20.500px;background:linear-gradient(#dadbdf,#a9aaae)"></div>
<div class="a" style="left:69px;top:426px;width:2px;height:12px;background:#c4c6ce"></div>
<div class="a" style="left:72px;top:426px;width:737px;height:12px;background:#c4c6ce"></div>
<div class="a" style="left:810px;top:426px;width:2px;height:12px;background:#c4c6ce"></div>
<svg class="a" style="left:45px;top:421px" width="831" height="21" viewBox="0 0 831 21">
<path d="M12.900 6.800 L7.700 11.400 L12.900 16Z" fill="#000"/>
<path d="M818.300 6.600 L823.400 11.300 L818.300 16Z" fill="#000"/>
<g fill="none" stroke="#000" stroke-width="1.5"><circle cx="780" cy="9.800" r="4"/><path d="M783 12.800 L787 16.800" stroke-width="1.800"/><path d="M777.800 9.800 H782.200 M780 7.600 V12" stroke-width="1.200"/>
<circle cx="800" cy="9.800" r="4"/><path d="M803 12.800 L807 16.800" stroke-width="1.800"/><path d="M797.800 9.800 H802.200" stroke-width="1.200"/></g>
</svg>

<!-- transport groups -->
<div class="grp" style="left:45px;width:224px">
<div class="a" style="left:64px;top:0;width:32px;height:28px;background:linear-gradient(#fcbd2d,#e9a922 50%,#d2961b)"></div>
<div class="sep" style="left:32px"></div><div class="sep" style="left:64px;background:#b98a22;box-shadow:none"></div><div class="sep" style="left:96px;background:#b98a22;box-shadow:none"></div><div class="sep" style="left:128px"></div><div class="sep" style="left:160px"></div><div class="sep" style="left:192px"></div>
<svg class="a" style="left:0;top:0" width="224" height="28" viewBox="0 0 224 28"><g fill="#000">
<rect x="10" y="7" width="3.2" height="14"/><path d="M21 7 L13.800 14 L21 21Z"/>
<path d="M47.800 7.500 L40.800 14 L47.800 20.500Z M55.200 7.500 L48.300 14 L55.200 20.500Z"/>
<path d="M76 7 L83.500 14 L76 21Z"/>
<rect x="105" y="7" width="5.300" height="14"/><rect x="113.600" y="7" width="5.300" height="14"/>
<rect x="137" y="7" width="14" height="14"/>
<path d="M169 7.500 L175.800 14 L169 20.500Z M176 7.500 L182.800 14 L176 20.500Z"/>
<path d="M202.300 7 L209.700 14 L202.300 21Z"/><rect x="209.500" y="7" width="3.200" height="14"/>
</g></svg>
</div>
<div class="grp" style="left:285px;width:96px">
<div class="sep" style="left:32px"></div><div class="sep" style="left:64px"></div>
<svg class="a" style="left:0;top:0" width="96" height="28" viewBox="0 0 96 28">
<g fill="none" stroke="#000" stroke-width="1.300"><ellipse cx="11.600" cy="11.400" rx="2.500" ry="1.800" transform="rotate(25 11.600 11.400)"/><ellipse cx="11.600" cy="17.700" rx="2.500" ry="1.800" transform="rotate(-25 11.600 17.700)"/></g>
<g fill="#d9dade" stroke="#2a2a2c" stroke-width=".800"><path d="M13.800 12.600 L22.900 17.600 L22.600 18.800 L13 13.900Z"/><path d="M13.800 16.500 L22.900 11.500 L22.600 10.300 L13 15.200Z"/></g>
<g fill="#d4d5d9" stroke="#000" stroke-width="1.500" stroke-linejoin="round"><path d="M44.300 7.500 H49.700 V17.300 H41.300 V10.500Z"/><path d="M49.500 10.900 H54.700 V20.600 H46.300 V13.900Z"/></g>
<path d="M41.300 10.800 H44.500 V7.600 M46.300 14.100 H49.500 V11" fill="none" stroke="#000" stroke-width="1.100"/>
<rect x="73.300" y="7.100" width="9.400" height="11.600" fill="#69696b"/><rect x="75" y="8.200" width="6" height=".900" fill="#c8c9cd"/>
<path d="M78.200 11.300 H83.600 L86.600 14.300 V20.600 H78.200Z" fill="#cfd0d4" stroke="#747476" stroke-width="1.100"/><path d="M83.600 11.300 V14.300 H86.600" fill="none" stroke="#747476" stroke-width="1"/>
</svg>
</div>
<div class="grp" style="left:397px;width:88px">
<div class="sep" style="left:44px"></div>
<svg class="a" style="left:0;top:0" width="88" height="28" viewBox="0 0 88 28">
<g id="undo"><path d="M10.300 11.650 A6.300 6.300 0 1 1 19.400 20" fill="none" stroke="#000" stroke-width="3.200"/><path d="M6.900 7.100 L7.100 13.900 L13.800 13.400Z" fill="#000"/><path d="M17.800 18.600 L21.200 20.400 L20.300 22.200Z" fill="#000"/></g>
<path d="M29.900 12.100 H38.100 L34 16.400Z" fill="#9c0a0e"/>
<g transform="translate(73.400 0) scale(-1 1)"><path d="M10.300 11.650 A6.300 6.300 0 1 1 19.400 20" fill="none" stroke="#707072" stroke-width="3.200"/><path d="M6.900 7.100 L7.100 13.900 L13.800 13.400Z" fill="#707072"/><path d="M17.800 18.600 L21.200 20.400 L20.300 22.200Z" fill="#707072"/></g>
<path d="M73.900 12.100 H82 L77.950 16.300Z" fill="#707072"/>
</svg>
</div>
<div class="grp" style="left:501px;width:64px">
<div class="sep" style="left:32px"></div>
<svg class="a" style="left:0;top:0" width="64" height="28" viewBox="0 0 64 28">
<path d="M8.500 8 V19.500 H24" fill="none" stroke="#000" stroke-width="1.100"/><path d="M10.250 17.750 V13.500 L13.500 8.750 L17.750 13 L20.500 10.750 L22.900 17.750Z" fill="#000"/>
<g fill="#000"><rect x="45.250" y="9.100" width="9.800" height="1.900" rx=".500"/><rect x="45.250" y="13.100" width="9.800" height="1.900" rx=".500"/><rect x="45.250" y="17" width="9.800" height="1.900" rx=".500"/></g>
<g font-family="Liberation Sans, sans-serif" font-weight="bold" font-size="4.600" fill="#000"><text x="41.200" y="10.700">1</text><text x="41.200" y="15.500">2</text><text x="41.200" y="20.600">3</text></g>
</svg>
</div>

<!-- sliders -->
<div class="cb on" style="top:495px"></div><div class="t lbl" style="left:68px;top:497px">DeClick (%)</div>
<div class="trk" style="top:495px"></div><div class="fill" style="top:498px;width:232px"></div><div class="th" style="left:410px;top:494px"></div><div class="val" style="top:492px">37.6</div>
<div class="cb on" style="top:527px"></div><div class="t lbl" style="left:68px;top:529px">DeCrackle (%)</div>
<div class="trk" style="top:527px"></div><div class="fill" style="top:530px;width:154px"></div><div class="th" style="left:332px;top:526px"></div><div class="val" style="top:524px">25.5</div>
<div class="cb" style="top:559px"></div><div class="t lbl" style="left:68px;top:561px">DeClip (%)</div>
<div class="trk" style="top:559px"></div><div class="fill" style="top:562px;width:312px;background:#606064"></div><div class="th" style="left:490px;top:558px"></div><div class="val" style="top:556px;color:#8a8a8e">50.0</div>
<div class="cb on" style="top:591px"></div><div class="t lbl" style="left:68px;top:593px">DeNoise (%)</div>
<div class="trk" style="top:591px"></div><div class="fill" style="top:594px;width:273px"></div><div class="th" style="left:451px;top:590px"></div><div class="val" style="top:588px">43.9</div>
<div class="cb" style="top:623px"></div><div class="t lbl" style="left:68px;top:625px">DeHum (%)</div>
<div class="a" style="left:173px;top:614px;width:128px;height:24px;border-radius:5px;overflow:hidden;background:linear-gradient(#e0e1e5,#cfd0d4 45%,#b0b1b5);box-shadow:0 0 0 1px rgba(30,32,40,.5)"><div class="a" style="left:0;top:0;width:64px;height:24px;background:linear-gradient(#fcbd2d,#e9a922 50%,#d2961b)"></div></div>
<div class="t" style="left:175px;top:620px;width:64px;text-align:center;font-size:12px;color:#7a5910">50 Hz</div>
<div class="t" style="left:236px;top:620px;width:64px;text-align:center;font-size:12px;color:#737478">60 Hz</div>

<!-- track list -->
<div class="t" style="left:897px;top:161px;font-size:12.9px;color:#fff">Track list</div>
<div class="a" style="left:892px;top:179px;width:320px;height:242.600px;background:#17161c"></div>
<div class="a" style="left:892px;top:179px;width:320px;height:27px;background:#464853"></div>
<div class="a" style="left:1071px;top:179px;width:1px;height:27px;background:#34353e;box-shadow:1px 0 0 #585a66"></div>
<div class="a" style="left:1151px;top:179px;width:1px;height:27px;background:#34353e;box-shadow:1px 0 0 #585a66"></div>
<div class="t" style="left:896px;top:187px;font-size:11.6px">Name</div>
<div class="t" style="left:1076px;top:188px;font-size:12px">Position</div>
<svg class="a" style="left:1136px;top:189px" width="11" height="8" viewBox="0 0 11 8"><path d="M5.500 0 L11 8 H0Z" fill="#1c1c22"/></svg>
<div class="t" style="left:896px;top:213px;font-size:11.1px">The Rise</div>
<div class="t" style="left:1076px;top:213px;font-size:11.5px">00:00:00:000</div>
<div class="a" style="left:892px;top:229px;width:320px;height:22px;background:#eeaa1b"></div>
<div class="t" style="left:896px;top:235px;font-size:11.4px;color:#000">The Fall</div>
<div class="t" style="left:1076px;top:235px;font-size:11.5px;color:#000">00:03:10:926</div>
<div class="a" style="left:892px;top:421.600px;width:64px;height:20.400px;border-radius:0 0 5px 5px;background:linear-gradient(#dcdde1,#c4c5c9 50%,#a6a7ab);box-shadow:0 0 0 1px rgba(30,32,40,.45)"></div>
<div class="a" style="left:924px;top:421.600px;width:1px;height:20.400px;background:#a2a3a8"></div>
<svg class="a" style="left:892px;top:421.700px" width="64" height="20" viewBox="0 0 64 20"><path d="M12 10.500 H20 M16 6.500 V14.500 M44 10.500 H52" stroke="#000" stroke-width="2"/></svg>

<!-- processing chain -->
<div class="t" style="left:897px;top:492px;font-size:12.5px;color:#fff">Processing chain</div>
<div class="a" style="left:892px;top:510px;width:320px;height:140px;background:#17161c;border:1px solid #55555a"></div>
<div class="a" style="left:895px;top:514px;width:314px;height:26px;background:#464853;border-radius:2px;box-shadow:inset 0 1px 0 #6b6d79"></div>
<div class="a" style="left:895px;top:542px;width:314px;height:26px;background:#464853;border-radius:2px;box-shadow:inset 0 1px 0 #6b6d79"></div>
<svg class="a" style="left:892px;top:510px" width="320" height="140" viewBox="0 0 320 140">
<g fill="#a8a9b2"><rect x="8" y="11" width="6.200" height="2.700"/><rect x="8" y="16.100" width="6.200" height="2.700"/><rect x="8" y="21.200" width="6.200" height="2.700"/>
<rect x="8" y="39" width="6.200" height="2.700"/><rect x="8" y="44.100" width="6.200" height="2.700"/><rect x="8" y="49.200" width="6.200" height="2.700"/></g>
<g fill="none" stroke="#f0a81c" stroke-width="2.700" stroke-linecap="round"><path d="M26.700 12.600 A6.200 6.200 0 1 0 34.300 12.600"/><path d="M30.500 9 V17"/>
<path d="M26.700 40.600 A6.200 6.200 0 1 0 34.300 40.600"/><path d="M30.500 37 V45"/></g>
<g stroke="#db3b3b" stroke-width="3.400"><path d="M272.700 12.900 L281.500 21.700 M281.500 12.900 L272.700 21.700"/><path d="M272.700 40.900 L281.500 49.700 M281.500 40.900 L272.700 49.700"/></g>
<g stroke="#cdced6" stroke-width="3.800"><path d="M291.200 16.300 H304.800 M298 9.500 V23.100"/><path d="M291.200 44.300 H304.800 M298 37.500 V51.100"/><path d="M291.200 72.200 H304.800 M298 65.400 V79"/></g>
</svg>
<div class="t" style="left:936px;top:520px;font-size:13px">Limit</div>
<div class="t" style="left:936px;top:548.700px;font-size:12.300px">Dither</div>

<!-- right panel -->
<div class="a" style="left:1228px;top:59px;width:4px;height:607px;background:linear-gradient(#5d6170,#545866)"></div>
<div class="a" style="left:1232px;top:59px;width:138px;height:607px;background:#17161c"></div>
<div class="a" style="left:1232px;top:59px;width:138px;height:24px;background:#31333d"></div>
<div class="t" style="left:1238px;top:65px;font-size:11.6px">Level Meter</div>
<svg class="a" style="left:1357px;top:66px" width="10" height="10" viewBox="0 0 10 10"><path d="M1.500 1.500 L8.500 8.500 M8.500 1.500 L1.500 8.500" stroke="#fff" stroke-width="2.600"/></svg>
<!-- bars -->
<div class="a" style="left:1272px;top:93px;width:39px;height:4px;background:#3f3e44"></div>
<div class="a" style="left:1321px;top:93px;width:39px;height:4px;background:#3f3e44"></div>
<div class="a" style="left:1272px;top:101px;width:39px;height:378px;background:#3f3e44"></div>
<div class="a" style="left:1321px;top:101px;width:39px;height:378px;background:#3f3e44"></div>
<div class="a" style="left:1272px;top:233px;width:39px;height:246px;background:#40d040"></div>
<div class="a" style="left:1272px;top:223px;width:39px;height:10px;background:#ffd966"></div>
<div class="a" style="left:1272px;top:206px;width:39px;height:2px;background:#ffd966"></div>
<div class="a" style="left:1272px;top:281px;width:39px;height:2px;background:#fff"></div>
<div class="a" style="left:1321px;top:246px;width:39px;height:233px;background:#40d040"></div>
<div class="a" style="left:1321px;top:224px;width:39px;height:2px;background:#ffd966"></div>
<div class="a" style="left:1321px;top:293px;width:39px;height:2px;background:#fff"></div>
<!-- scale -->
<div class="sc" style="top:97px">0</div><div class="tk" style="top:102px"></div>
<div class="sc" style="top:134px">-4</div><div class="tk" style="top:139px"></div>
<div class="sc" style="top:172px">-8</div><div class="tk" style="top:177px"></div>
<div class="sc" style="top:209px">-12</div><div class="tk" style="top:214px"></div>
<div class="sc" style="top:247px">-16</div><div class="tk" style="top:252px"></div>
<div class="sc" style="top:285px">-20</div><div class="tk" style="top:290px"></div>
<div class="sc" style="top:308px">-30</div><div class="tk" style="top:313px"></div>
<div class="sc" style="top:331px">-40</div><div class="tk" style="top:336px"></div>
<div class="sc" style="top:355px">-50</div><div class="tk" style="top:360px"></div>
<div class="sc" style="top:379px">-60</div><div class="tk" style="top:384px"></div>
<div class="sc" style="top:402px">-70</div><div class="tk" style="top:407px"></div>
<div class="sc" style="top:426px">-80</div><div class="tk" style="top:431px"></div>
<div class="sc" style="top:449px">-90</div><div class="tk" style="top:454px"></div>
<div class="sc" style="top:472px">-100</div><div class="tk" style="top:477px"></div>
<div class="t" style="left:1272px;top:485px;width:39px;text-align:center;font-size:11.700px;color:#fff">-11.17</div>
<div class="t" style="left:1321px;top:485px;width:39px;text-align:center;font-size:11.700px;color:#fff">-13.06</div>
<!-- correlation -->
<div class="a" style="left:1232px;top:507px;width:138px;height:4px;background:#565a68"></div>
<div class="a" style="left:1232px;top:511px;width:138px;height:24px;background:#31333d"></div>
<div class="t" style="left:1238px;top:517px;font-size:11.7px">Correlation Meter</div>
<svg class="a" style="left:1357px;top:518px" width="10" height="10" viewBox="0 0 10 10"><path d="M1.500 1.500 L8.500 8.500 M8.500 1.500 L1.500 8.500" stroke="#fff" stroke-width="2.600"/></svg>
<svg class="a" style="left:1232px;top:535px" width="138" height="131" viewBox="1232 535 138 131">
<defs><clipPath id="cc"><rect x="1247" y="550" width="108" height="80"/></clipPath></defs>
<rect x="1247" y="550" width="108" height="80" fill="#1b1a21"/>
<g stroke="#46454c" stroke-width="1.400" clip-path="url(#cc)"><path d="M1247 550 L1355 630 M1355 550 L1247 630 M1247 590 H1355 M1301 550 V630"/></g>
<g fill="none" stroke="#f5d562" stroke-width=".9" clip-path="url(#cc)"><ellipse cx="1297.3" cy="588.0" rx="4.6" ry="1.8" transform="rotate(96 1297.3 588.0)" opacity="0.70"/><ellipse cx="1306.8" cy="606.2" rx="2.1" ry="1.3" transform="rotate(13 1306.8 606.2)" opacity="0.59"/><ellipse cx="1286.0" cy="570.0" rx="2.5" ry="1.2" transform="rotate(113 1286.0 570.0)" opacity="0.93"/><ellipse cx="1298.9" cy="576.7" rx="5.9" ry="2.2" transform="rotate(155 1298.9 576.7)" opacity="0.67"/><ellipse cx="1301.7" cy="595.3" rx="3.2" ry="2.6" transform="rotate(33 1301.7 595.3)" opacity="0.78"/><ellipse cx="1302.2" cy="579.5" rx="4.2" ry="1.6" transform="rotate(11 1302.2 579.5)" opacity="0.63"/><ellipse cx="1304.6" cy="581.2" rx="3.3" ry="2.2" transform="rotate(82 1304.6 581.2)" opacity="0.67"/><ellipse cx="1313.5" cy="591.5" rx="3.0" ry="2.0" transform="rotate(95 1313.5 591.5)" opacity="0.90"/><ellipse cx="1306.1" cy="586.2" rx="5.9" ry="2.5" transform="rotate(75 1306.1 586.2)" opacity="0.85"/><ellipse cx="1300.9" cy="601.7" rx="2.2" ry="1.5" transform="rotate(138 1300.9 601.7)" opacity="0.78"/><ellipse cx="1309.6" cy="596.6" rx="4.8" ry="3.2" transform="rotate(104 1309.6 596.6)" opacity="0.73"/><ellipse cx="1322.3" cy="601.6" rx="3.9" ry="2.8" transform="rotate(11 1322.3 601.6)" opacity="0.83"/><ellipse cx="1304.2" cy="557.2" rx="5.3" ry="2.7" transform="rotate(69 1304.2 557.2)" opacity="0.82"/><ellipse cx="1308.3" cy="605.3" rx="2.7" ry="1.1" transform="rotate(11 1308.3 605.3)" opacity="0.86"/><ellipse cx="1302.2" cy="598.6" rx="3.6" ry="3.0" transform="rotate(15 1302.2 598.6)" opacity="0.73"/><ellipse cx="1292.7" cy="561.6" rx="5.3" ry="4.4" transform="rotate(50 1292.7 561.6)" opacity="0.72"/><ellipse cx="1284.0" cy="576.9" rx="5.8" ry="2.5" transform="rotate(32 1284.0 576.9)" opacity="0.64"/><ellipse cx="1296.1" cy="594.9" rx="4.4" ry="2.2" transform="rotate(1 1296.1 594.9)" opacity="0.72"/><ellipse cx="1290.7" cy="580.8" rx="5.8" ry="4.2" transform="rotate(93 1290.7 580.8)" opacity="0.80"/><ellipse cx="1302.8" cy="587.1" rx="5.6" ry="4.4" transform="rotate(157 1302.8 587.1)" opacity="0.87"/><ellipse cx="1293.1" cy="581.2" rx="2.4" ry="1.7" transform="rotate(11 1293.1 581.2)" opacity="0.58"/><ellipse cx="1299.6" cy="593.7" rx="3.4" ry="1.3" transform="rotate(0 1299.6 593.7)" opacity="0.61"/><ellipse cx="1303.7" cy="601.9" rx="2.1" ry="1.7" transform="rotate(111 1303.7 601.9)" opacity="0.61"/><ellipse cx="1296.5" cy="592.5" rx="3.5" ry="1.4" transform="rotate(153 1296.5 592.5)" opacity="0.95"/><ellipse cx="1293.2" cy="575.5" rx="2.3" ry="1.0" transform="rotate(62 1293.2 575.5)" opacity="0.66"/><ellipse cx="1306.9" cy="592.3" rx="2.1" ry="1.8" transform="rotate(95 1306.9 592.3)" opacity="0.61"/><ellipse cx="1300.9" cy="586.8" rx="4.1" ry="3.7" transform="rotate(155 1300.9 586.8)" opacity="0.83"/><ellipse cx="1296.0" cy="591.8" rx="2.7" ry="2.1" transform="rotate(96 1296.0 591.8)" opacity="0.86"/><ellipse cx="1296.1" cy="587.2" rx="5.2" ry="4.7" transform="rotate(153 1296.1 587.2)" opacity="0.87"/><ellipse cx="1315.2" cy="595.0" rx="2.9" ry="1.8" transform="rotate(64 1315.2 595.0)" opacity="0.56"/><ellipse cx="1306.4" cy="601.1" rx="3.0" ry="2.2" transform="rotate(172 1306.4 601.1)" opacity="0.73"/><ellipse cx="1326.8" cy="623.7" rx="5.8" ry="3.2" transform="rotate(40 1326.8 623.7)" opacity="0.64"/><ellipse cx="1299.7" cy="594.8" rx="4.5" ry="3.8" transform="rotate(151 1299.7 594.8)" opacity="0.74"/><ellipse cx="1303.8" cy="572.0" rx="2.3" ry="1.7" transform="rotate(164 1303.8 572.0)" opacity="0.86"/><ellipse cx="1308.7" cy="586.8" rx="2.7" ry="2.1" transform="rotate(60 1308.7 586.8)" opacity="0.87"/><ellipse cx="1309.5" cy="602.8" rx="3.6" ry="3.1" transform="rotate(130 1309.5 602.8)" opacity="0.62"/><ellipse cx="1302.2" cy="596.6" rx="5.6" ry="4.5" transform="rotate(26 1302.2 596.6)" opacity="0.88"/><ellipse cx="1312.6" cy="609.1" rx="3.4" ry="2.2" transform="rotate(24 1312.6 609.1)" opacity="0.56"/><ellipse cx="1312.9" cy="608.5" rx="4.1" ry="3.5" transform="rotate(78 1312.9 608.5)" opacity="0.90"/><ellipse cx="1307.7" cy="592.5" rx="3.0" ry="1.5" transform="rotate(43 1307.7 592.5)" opacity="0.78"/><ellipse cx="1295.5" cy="592.1" rx="2.5" ry="2.1" transform="rotate(64 1295.5 592.1)" opacity="0.73"/><ellipse cx="1296.0" cy="561.6" rx="3.7" ry="3.1" transform="rotate(90 1296.0 561.6)" opacity="0.76"/><ellipse cx="1300.9" cy="587.3" rx="3.8" ry="1.7" transform="rotate(1 1300.9 587.3)" opacity="0.87"/><ellipse cx="1299.6" cy="600.0" rx="4.9" ry="3.2" transform="rotate(59 1299.6 600.0)" opacity="0.76"/><ellipse cx="1294.7" cy="566.1" rx="2.4" ry="1.6" transform="rotate(45 1294.7 566.1)" opacity="0.66"/><ellipse cx="1310.0" cy="588.9" rx="4.2" ry="3.3" transform="rotate(164 1310.0 588.9)" opacity="0.73"/><ellipse cx="1300.6" cy="575.6" rx="4.0" ry="3.0" transform="rotate(81 1300.6 575.6)" opacity="0.76"/><ellipse cx="1284.6" cy="559.1" rx="4.8" ry="4.0" transform="rotate(170 1284.6 559.1)" opacity="0.65"/><ellipse cx="1292.4" cy="557.4" rx="5.4" ry="2.3" transform="rotate(22 1292.4 557.4)" opacity="0.73"/><ellipse cx="1304.5" cy="599.9" rx="2.3" ry="1.6" transform="rotate(141 1304.5 599.9)" opacity="0.91"/><ellipse cx="1300.2" cy="605.8" rx="4.6" ry="2.0" transform="rotate(159 1300.2 605.8)" opacity="0.94"/><ellipse cx="1290.9" cy="603.2" rx="3.6" ry="2.2" transform="rotate(178 1290.9 603.2)" opacity="0.88"/><ellipse cx="1300.4" cy="600.1" rx="4.1" ry="2.2" transform="rotate(35 1300.4 600.1)" opacity="0.68"/><ellipse cx="1302.9" cy="589.0" rx="4.2" ry="2.5" transform="rotate(3 1302.9 589.0)" opacity="0.68"/><ellipse cx="1301.3" cy="576.1" rx="2.3" ry="2.0" transform="rotate(142 1301.3 576.1)" opacity="0.94"/><ellipse cx="1303.3" cy="599.7" rx="2.2" ry="1.7" transform="rotate(49 1303.3 599.7)" opacity="0.60"/><ellipse cx="1283.2" cy="566.7" rx="5.3" ry="2.6" transform="rotate(27 1283.2 566.7)" opacity="0.92"/><ellipse cx="1296.7" cy="569.2" rx="2.4" ry="0.9" transform="rotate(124 1296.7 569.2)" opacity="0.72"/><ellipse cx="1309.9" cy="621.5" rx="4.5" ry="3.6" transform="rotate(15 1309.9 621.5)" opacity="0.89"/><ellipse cx="1309.2" cy="616.9" rx="3.8" ry="2.0" transform="rotate(100 1309.2 616.9)" opacity="0.92"/><ellipse cx="1298.6" cy="590.7" rx="4.1" ry="2.0" transform="rotate(20 1298.6 590.7)" opacity="0.61"/><ellipse cx="1305.0" cy="599.2" rx="3.2" ry="1.7" transform="rotate(137 1305.0 599.2)" opacity="0.67"/><ellipse cx="1297.9" cy="581.6" rx="3.4" ry="1.2" transform="rotate(45 1297.9 581.6)" opacity="0.56"/><ellipse cx="1308.5" cy="584.6" rx="2.8" ry="1.7" transform="rotate(168 1308.5 584.6)" opacity="0.59"/><ellipse cx="1310.6" cy="593.3" rx="4.0" ry="3.2" transform="rotate(71 1310.6 593.3)" opacity="0.75"/><ellipse cx="1310.2" cy="567.9" rx="3.4" ry="2.7" transform="rotate(127 1310.2 567.9)" opacity="0.80"/><ellipse cx="1293.9" cy="581.2" rx="2.2" ry="0.9" transform="rotate(13 1293.9 581.2)" opacity="0.85"/><ellipse cx="1298.4" cy="591.4" rx="2.3" ry="1.9" transform="rotate(157 1298.4 591.4)" opacity="0.82"/><ellipse cx="1296.8" cy="590.1" rx="3.2" ry="1.9" transform="rotate(28 1296.8 590.1)" opacity="0.73"/><ellipse cx="1285.7" cy="594.4" rx="5.9" ry="3.8" transform="rotate(44 1285.7 594.4)" opacity="0.94"/><ellipse cx="1294.6" cy="587.9" rx="2.0" ry="1.1" transform="rotate(85 1294.6 587.9)" opacity="0.75"/><ellipse cx="1297.8" cy="598.1" rx="2.0" ry="1.0" transform="rotate(16 1297.8 598.1)" opacity="0.71"/><ellipse cx="1303.0" cy="592.9" rx="3.2" ry="1.5" transform="rotate(105 1303.0 592.9)" opacity="0.76"/><ellipse cx="1310.6" cy="585.9" rx="4.9" ry="4.1" transform="rotate(70 1310.6 585.9)" opacity="0.68"/><ellipse cx="1306.0" cy="597.5" rx="4.9" ry="3.4" transform="rotate(8 1306.0 597.5)" opacity="0.88"/><ellipse cx="1314.3" cy="602.2" rx="4.9" ry="3.9" transform="rotate(25 1314.3 602.2)" opacity="0.76"/><ellipse cx="1289.8" cy="564.3" rx="5.2" ry="4.2" transform="rotate(105 1289.8 564.3)" opacity="0.91"/><ellipse cx="1306.1" cy="577.5" rx="2.9" ry="1.1" transform="rotate(24 1306.1 577.5)" opacity="0.69"/><ellipse cx="1305.1" cy="613.6" rx="4.2" ry="2.9" transform="rotate(113 1305.1 613.6)" opacity="0.82"/><ellipse cx="1301.4" cy="588.9" rx="5.2" ry="4.0" transform="rotate(91 1301.4 588.9)" opacity="0.76"/><ellipse cx="1302.7" cy="585.4" rx="5.7" ry="2.8" transform="rotate(13 1302.7 585.4)" opacity="0.61" stroke-dasharray="1.3 1.1"/><ellipse cx="1306.4" cy="586.0" rx="5.7" ry="5.1" transform="rotate(89 1306.4 586.0)" opacity="0.65" stroke-dasharray="1.3 1.1"/><ellipse cx="1287.9" cy="565.1" rx="5.8" ry="4.0" transform="rotate(116 1287.9 565.1)" opacity="0.53" stroke-dasharray="1.3 1.1"/><ellipse cx="1301.2" cy="600.1" rx="5.7" ry="3.0" transform="rotate(102 1301.2 600.1)" opacity="0.50" stroke-dasharray="1.3 1.1"/><ellipse cx="1305.9" cy="603.6" rx="5.4" ry="3.9" transform="rotate(122 1305.9 603.6)" opacity="0.62" stroke-dasharray="1.3 1.1"/><ellipse cx="1293.6" cy="570.6" rx="4.3" ry="1.8" transform="rotate(161 1293.6 570.6)" opacity="0.58" stroke-dasharray="1.3 1.1"/><ellipse cx="1323.8" cy="628.5" rx="2.1" ry="1.3" transform="rotate(148 1323.8 628.5)" opacity="0.89" stroke-dasharray="1.3 1.1"/><ellipse cx="1293.9" cy="578.1" rx="3.0" ry="2.7" transform="rotate(38 1293.9 578.1)" opacity="0.73" stroke-dasharray="1.3 1.1"/><ellipse cx="1301.1" cy="606.6" rx="6.8" ry="2.9" transform="rotate(148 1301.1 606.6)" opacity="0.70" stroke-dasharray="1.3 1.1"/><ellipse cx="1319.6" cy="606.4" rx="3.2" ry="2.7" transform="rotate(88 1319.6 606.4)" opacity="0.51" stroke-dasharray="1.3 1.1"/><ellipse cx="1311.5" cy="610.0" rx="4.3" ry="2.2" transform="rotate(25 1311.5 610.0)" opacity="0.64" stroke-dasharray="1.3 1.1"/><ellipse cx="1282.2" cy="583.3" rx="2.0" ry="1.5" transform="rotate(151 1282.2 583.3)" opacity="0.55" stroke-dasharray="1.3 1.1"/><ellipse cx="1319.2" cy="611.5" rx="6.5" ry="3.3" transform="rotate(67 1319.2 611.5)" opacity="0.66" stroke-dasharray="1.3 1.1"/><ellipse cx="1313.2" cy="612.7" rx="3.8" ry="2.2" transform="rotate(50 1313.2 612.7)" opacity="0.52" stroke-dasharray="1.3 1.1"/><ellipse cx="1306.0" cy="620.2" rx="3.4" ry="3.0" transform="rotate(45 1306.0 620.2)" opacity="0.61" stroke-dasharray="1.3 1.1"/><ellipse cx="1296.9" cy="578.8" rx="3.9" ry="3.4" transform="rotate(159 1296.9 578.8)" opacity="0.82" stroke-dasharray="1.3 1.1"/><ellipse cx="1301.8" cy="558.3" rx="6.7" ry="4.4" transform="rotate(130 1301.8 558.3)" opacity="0.52" stroke-dasharray="1.3 1.1"/><ellipse cx="1309.3" cy="583.9" rx="5.8" ry="4.1" transform="rotate(52 1309.3 583.9)" opacity="0.52" stroke-dasharray="1.3 1.1"/><ellipse cx="1307.7" cy="597.1" rx="4.4" ry="2.4" transform="rotate(54 1307.7 597.1)" opacity="0.80" stroke-dasharray="1.3 1.1"/><ellipse cx="1309.3" cy="602.7" rx="5.3" ry="2.7" transform="rotate(100 1309.3 602.7)" opacity="0.66" stroke-dasharray="1.3 1.1"/><ellipse cx="1300.5" cy="597.0" rx="3.0" ry="2.6" transform="rotate(89 1300.5 597.0)" opacity="0.59" stroke-dasharray="1.3 1.1"/><ellipse cx="1339.5" cy="630.8" rx="4.2" ry="1.8" transform="rotate(35 1339.5 630.8)" opacity="0.54" stroke-dasharray="1.3 1.1"/><ellipse cx="1297.2" cy="587.3" rx="3.2" ry="1.6" transform="rotate(103 1297.2 587.3)" opacity="0.85" stroke-dasharray="1.3 1.1"/><ellipse cx="1309.9" cy="586.1" rx="4.1" ry="2.6" transform="rotate(68 1309.9 586.1)" opacity="0.64" stroke-dasharray="1.3 1.1"/><ellipse cx="1305.9" cy="603.9" rx="6.8" ry="2.9" transform="rotate(91 1305.9 603.9)" opacity="0.75" stroke-dasharray="1.3 1.1"/><ellipse cx="1309.8" cy="595.8" rx="3.4" ry="1.6" transform="rotate(72 1309.8 595.8)" opacity="0.68" stroke-dasharray="1.3 1.1"/><ellipse cx="1321.8" cy="619.7" rx="6.4" ry="2.3" transform="rotate(6 1321.8 619.7)" opacity="0.78" stroke-dasharray="1.3 1.1"/><ellipse cx="1314.7" cy="602.8" rx="4.9" ry="1.7" transform="rotate(70 1314.7 602.8)" opacity="0.87" stroke-dasharray="1.3 1.1"/><ellipse cx="1322.9" cy="598.8" rx="6.9" ry="3.3" transform="rotate(20 1322.9 598.8)" opacity="0.56" stroke-dasharray="1.3 1.1"/><ellipse cx="1291.1" cy="563.6" rx="6.7" ry="5.0" transform="rotate(117 1291.1 563.6)" opacity="0.81" stroke-dasharray="1.3 1.1"/><ellipse cx="1289.3" cy="570.4" rx="2.2" ry="1.7" transform="rotate(42 1289.3 570.4)" opacity="0.87" stroke-dasharray="1.3 1.1"/><ellipse cx="1302.8" cy="578.6" rx="2.6" ry="1.3" transform="rotate(115 1302.8 578.6)" opacity="0.78" stroke-dasharray="1.3 1.1"/><ellipse cx="1302.5" cy="595.9" rx="4.6" ry="3.1" transform="rotate(70 1302.5 595.9)" opacity="0.59" stroke-dasharray="1.3 1.1"/><ellipse cx="1301.7" cy="587.7" rx="3.5" ry="2.1" transform="rotate(173 1301.7 587.7)" opacity="0.76" stroke-dasharray="1.3 1.1"/><ellipse cx="1314.8" cy="601.6" rx="3.2" ry="1.5" transform="rotate(173 1314.8 601.6)" opacity="0.78" stroke-dasharray="1.3 1.1"/><ellipse cx="1299.9" cy="589.5" rx="4.5" ry="3.2" transform="rotate(76 1299.9 589.5)" opacity="0.60" stroke-dasharray="1.3 1.1"/><ellipse cx="1307.7" cy="563.3" rx="3.1" ry="1.2" transform="rotate(61 1307.7 563.3)" opacity="0.67" stroke-dasharray="1.3 1.1"/><ellipse cx="1304.4" cy="583.1" rx="6.0" ry="4.5" transform="rotate(91 1304.4 583.1)" opacity="0.58" stroke-dasharray="1.3 1.1"/><ellipse cx="1310.3" cy="603.9" rx="6.1" ry="2.9" transform="rotate(40 1310.3 603.9)" opacity="0.80" stroke-dasharray="1.3 1.1"/><ellipse cx="1278.2" cy="587.1" rx="4.5" ry="2.0" transform="rotate(40 1278.2 587.1)" opacity="0.67" stroke-dasharray="1.3 1.1"/><ellipse cx="1307.7" cy="561.0" rx="2.7" ry="1.5" transform="rotate(38 1307.7 561.0)" opacity="0.89" stroke-dasharray="1.3 1.1"/><ellipse cx="1301.8" cy="594.4" rx="2.3" ry="1.3" transform="rotate(162 1301.8 594.4)" opacity="0.85" stroke-dasharray="1.3 1.1"/><ellipse cx="1325.2" cy="570.8" rx="6.7" ry="3.5" transform="rotate(33 1325.2 570.8)" opacity="0.87" stroke-dasharray="1.3 1.1"/><ellipse cx="1303.9" cy="589.0" rx="5.3" ry="3.0" transform="rotate(67 1303.9 589.0)" opacity="0.63" stroke-dasharray="1.3 1.1"/><ellipse cx="1301.8" cy="590.9" rx="3.4" ry="1.8" transform="rotate(172 1301.8 590.9)" opacity="0.55" stroke-dasharray="1.3 1.1"/><ellipse cx="1308.7" cy="600.8" rx="3.8" ry="3.0" transform="rotate(148 1308.7 600.8)" opacity="0.67" stroke-dasharray="1.3 1.1"/><ellipse cx="1308.4" cy="609.7" rx="3.9" ry="3.3" transform="rotate(35 1308.4 609.7)" opacity="0.65" stroke-dasharray="1.3 1.1"/><ellipse cx="1304.8" cy="592.8" rx="4.1" ry="3.2" transform="rotate(138 1304.8 592.8)" opacity="0.52" stroke-dasharray="1.3 1.1"/><ellipse cx="1304.3" cy="596.3" rx="6.6" ry="3.2" transform="rotate(135 1304.3 596.3)" opacity="0.86" stroke-dasharray="1.3 1.1"/><ellipse cx="1293.3" cy="585.3" rx="6.8" ry="4.7" transform="rotate(47 1293.3 585.3)" opacity="0.79" stroke-dasharray="1.3 1.1"/><ellipse cx="1293.7" cy="587.2" rx="2.0" ry="1.5" transform="rotate(165 1293.7 587.2)" opacity="0.75" stroke-dasharray="1.3 1.1"/><ellipse cx="1304.3" cy="593.3" rx="3.2" ry="1.9" transform="rotate(172 1304.3 593.3)" opacity="0.88" stroke-dasharray="1.3 1.1"/><ellipse cx="1293.4" cy="582.0" rx="4.1" ry="2.6" transform="rotate(167 1293.4 582.0)" opacity="0.57" stroke-dasharray="1.3 1.1"/><ellipse cx="1318.3" cy="593.3" rx="6.1" ry="4.7" transform="rotate(109 1318.3 593.3)" opacity="0.63" stroke-dasharray="1.3 1.1"/><ellipse cx="1292.1" cy="586.3" rx="5.9" ry="2.3" transform="rotate(36 1292.1 586.3)" opacity="0.80" stroke-dasharray="1.3 1.1"/><ellipse cx="1299.3" cy="591.5" rx="2.2" ry="1.4" transform="rotate(59 1299.3 591.5)" opacity="0.89" stroke-dasharray="1.3 1.1"/><ellipse cx="1335.6" cy="620.3" rx="3.3" ry="1.3" transform="rotate(17 1335.6 620.3)" opacity="0.70" stroke-dasharray="1.3 1.1"/><ellipse cx="1307.8" cy="581.4" rx="3.2" ry="1.8" transform="rotate(112 1307.8 581.4)" opacity="0.77" stroke-dasharray="1.3 1.1"/><ellipse cx="1316.6" cy="582.4" rx="5.3" ry="2.2" transform="rotate(151 1316.6 582.4)" opacity="0.62" stroke-dasharray="1.3 1.1"/><ellipse cx="1297.7" cy="573.5" rx="5.7" ry="2.6" transform="rotate(45 1297.7 573.5)" opacity="0.60" stroke-dasharray="1.3 1.1"/><ellipse cx="1298.8" cy="616.6" rx="4.9" ry="2.6" transform="rotate(71 1298.8 616.6)" opacity="0.90" stroke-dasharray="1.3 1.1"/><ellipse cx="1296.2" cy="577.5" rx="6.0" ry="4.3" transform="rotate(178 1296.2 577.5)" opacity="0.54" stroke-dasharray="1.3 1.1"/><ellipse cx="1284.6" cy="559.9" rx="6.2" ry="5.3" transform="rotate(7 1284.6 559.9)" opacity="0.62" stroke-dasharray="1.3 1.1"/><ellipse cx="1302.6" cy="599.8" rx="6.9" ry="4.6" transform="rotate(167 1302.6 599.8)" opacity="0.65" stroke-dasharray="1.3 1.1"/><ellipse cx="1314.3" cy="599.4" rx="3.3" ry="2.6" transform="rotate(170 1314.3 599.4)" opacity="0.54" stroke-dasharray="1.3 1.1"/><ellipse cx="1298.5" cy="567.5" rx="3.1" ry="1.7" transform="rotate(25 1298.5 567.5)" opacity="0.58" stroke-dasharray="1.3 1.1"/><ellipse cx="1291.3" cy="594.3" rx="5.3" ry="2.4" transform="rotate(2 1291.3 594.3)" opacity="0.63" stroke-dasharray="1.3 1.1"/><ellipse cx="1304.1" cy="583.1" rx="3.6" ry="1.6" transform="rotate(143 1304.1 583.1)" opacity="0.72" stroke-dasharray="1.3 1.1"/><ellipse cx="1304.2" cy="597.9" rx="4.0" ry="2.6" transform="rotate(115 1304.2 597.9)" opacity="0.54" stroke-dasharray="1.3 1.1"/><ellipse cx="1298.5" cy="608.5" rx="4.0" ry="2.0" transform="rotate(55 1298.5 608.5)" opacity="0.88" stroke-dasharray="1.3 1.1"/><ellipse cx="1288.8" cy="586.0" rx="3.8" ry="2.2" transform="rotate(156 1288.8 586.0)" opacity="0.90" stroke-dasharray="1.3 1.1"/><ellipse cx="1294.6" cy="584.4" rx="5.6" ry="2.6" transform="rotate(1 1294.6 584.4)" opacity="0.86" stroke-dasharray="1.3 1.1"/><ellipse cx="1281.8" cy="565.1" rx="4.0" ry="3.4" transform="rotate(83 1281.8 565.1)" opacity="0.57" stroke-dasharray="1.3 1.1"/><ellipse cx="1311.6" cy="612.0" rx="5.2" ry="4.4" transform="rotate(16 1311.6 612.0)" opacity="0.75" stroke-dasharray="1.3 1.1"/><ellipse cx="1288.6" cy="579.3" rx="2.7" ry="1.4" transform="rotate(94 1288.6 579.3)" opacity="0.87" stroke-dasharray="1.3 1.1"/><ellipse cx="1303.9" cy="608.1" rx="6.0" ry="5.3" transform="rotate(36 1303.9 608.1)" opacity="0.55" stroke-dasharray="1.3 1.1"/><ellipse cx="1330.5" cy="630.0" rx="4.4" ry="1.7" transform="rotate(167 1330.5 630.0)" opacity="0.66" stroke-dasharray="1.3 1.1"/><ellipse cx="1317.6" cy="606.7" rx="6.1" ry="2.7" transform="rotate(141 1317.6 606.7)" opacity="0.59" stroke-dasharray="1.3 1.1"/><ellipse cx="1280.3" cy="566.8" rx="6.1" ry="2.8" transform="rotate(39 1280.3 566.8)" opacity="0.66" stroke-dasharray="1.3 1.1"/><ellipse cx="1294.7" cy="572.9" rx="2.6" ry="1.3" transform="rotate(130 1294.7 572.9)" opacity="0.86" stroke-dasharray="1.3 1.1"/><ellipse cx="1309.8" cy="612.4" rx="5.8" ry="2.1" transform="rotate(151 1309.8 612.4)" opacity="0.55" stroke-dasharray="1.3 1.1"/><ellipse cx="1299.1" cy="569.7" rx="5.1" ry="2.7" transform="rotate(76 1299.1 569.7)" opacity="0.73" stroke-dasharray="1.3 1.1"/><ellipse cx="1286.1" cy="570.1" rx="4.2" ry="2.5" transform="rotate(4 1286.1 570.1)" opacity="0.75" stroke-dasharray="1.3 1.1"/><ellipse cx="1295.5" cy="577.7" rx="5.8" ry="4.5" transform="rotate(82 1295.5 577.7)" opacity="0.57" stroke-dasharray="1.3 1.1"/><ellipse cx="1297.5" cy="582.3" rx="2.6" ry="1.6" transform="rotate(17 1297.5 582.3)" opacity="0.68" stroke-dasharray="1.3 1.1"/><ellipse cx="1299.7" cy="585.0" rx="5.2" ry="2.0" transform="rotate(132 1299.7 585.0)" opacity="0.81" stroke-dasharray="1.3 1.1"/><ellipse cx="1299.4" cy="584.2" rx="4.5" ry="2.5" transform="rotate(171 1299.4 584.2)" opacity="0.55" stroke-dasharray="1.3 1.1"/><ellipse cx="1339.2" cy="615.8" rx="5.7" ry="4.5" transform="rotate(35 1339.2 615.8)" opacity="0.89" stroke-dasharray="1.3 1.1"/><ellipse cx="1280.2" cy="547.7" rx="6.6" ry="2.9" transform="rotate(142 1280.2 547.7)" opacity="0.87" stroke-dasharray="1.3 1.1"/><ellipse cx="1306.3" cy="605.9" rx="5.8" ry="2.5" transform="rotate(161 1306.3 605.9)" opacity="0.61" stroke-dasharray="1.3 1.1"/><ellipse cx="1307.8" cy="591.9" rx="4.5" ry="3.9" transform="rotate(37 1307.8 591.9)" opacity="0.61" stroke-dasharray="1.3 1.1"/><ellipse cx="1295.0" cy="574.9" rx="2.2" ry="1.0" transform="rotate(29 1295.0 574.9)" opacity="0.87" stroke-dasharray="1.3 1.1"/><ellipse cx="1309.1" cy="567.3" rx="2.8" ry="2.2" transform="rotate(21 1309.1 567.3)" opacity="0.71" stroke-dasharray="1.3 1.1"/><ellipse cx="1302.3" cy="576.8" rx="6.4" ry="4.2" transform="rotate(104 1302.3 576.8)" opacity="0.85" stroke-dasharray="1.3 1.1"/><ellipse cx="1308.1" cy="639.7" rx="5.1" ry="2.9" transform="rotate(144 1308.1 639.7)" opacity="0.61" stroke-dasharray="1.3 1.1"/><ellipse cx="1313.5" cy="612.1" rx="3.8" ry="2.9" transform="rotate(80 1313.5 612.1)" opacity="0.57" stroke-dasharray="1.3 1.1"/><ellipse cx="1304.3" cy="588.6" rx="6.1" ry="3.0" transform="rotate(115 1304.3 588.6)" opacity="0.89" stroke-dasharray="1.3 1.1"/><ellipse cx="1297.2" cy="565.5" rx="3.6" ry="1.3" transform="rotate(6 1297.2 565.5)" opacity="0.56" stroke-dasharray="1.3 1.1"/><ellipse cx="1300.8" cy="573.8" rx="4.6" ry="3.8" transform="rotate(24 1300.8 573.8)" opacity="0.59" stroke-dasharray="1.3 1.1"/><ellipse cx="1302.3" cy="587.3" rx="2.0" ry="1.1" transform="rotate(19 1302.3 587.3)" opacity="0.64" stroke-dasharray="1.3 1.1"/><ellipse cx="1293.8" cy="598.5" rx="4.9" ry="2.3" transform="rotate(112 1293.8 598.5)" opacity="0.69" stroke-dasharray="1.3 1.1"/><ellipse cx="1301.5" cy="623.1" rx="3.2" ry="1.4" transform="rotate(17 1301.5 623.1)" opacity="0.76" stroke-dasharray="1.3 1.1"/><ellipse cx="1321.7" cy="605.9" rx="4.0" ry="2.0" transform="rotate(2 1321.7 605.9)" opacity="0.76" stroke-dasharray="1.3 1.1"/><ellipse cx="1297.6" cy="574.0" rx="5.2" ry="3.1" transform="rotate(169 1297.6 574.0)" opacity="0.79" stroke-dasharray="1.3 1.1"/><ellipse cx="1285.6" cy="598.4" rx="2.2" ry="1.4" transform="rotate(73 1285.6 598.4)" opacity="0.60" stroke-dasharray="1.3 1.1"/><ellipse cx="1310.7" cy="620.0" rx="2.1" ry="1.3" transform="rotate(169 1310.7 620.0)" opacity="0.56" stroke-dasharray="1.3 1.1"/><ellipse cx="1295.6" cy="602.1" rx="4.5" ry="3.2" transform="rotate(146 1295.6 602.1)" opacity="0.57" stroke-dasharray="1.3 1.1"/><ellipse cx="1293.4" cy="587.7" rx="2.2" ry="1.9" transform="rotate(141 1293.4 587.7)" opacity="0.79" stroke-dasharray="1.3 1.1"/><ellipse cx="1317.5" cy="623.2" rx="5.7" ry="3.5" transform="rotate(134 1317.5 623.2)" opacity="0.68" stroke-dasharray="1.3 1.1"/><ellipse cx="1299.0" cy="593.0" rx="3.2" ry="1.2" transform="rotate(60 1299.0 593.0)" opacity="0.80" stroke-dasharray="1.3 1.1"/><ellipse cx="1310.5" cy="572.1" rx="5.6" ry="2.8" transform="rotate(100 1310.5 572.1)" opacity="0.67" stroke-dasharray="1.3 1.1"/><ellipse cx="1313.5" cy="590.6" rx="3.3" ry="2.3" transform="rotate(174 1313.5 590.6)" opacity="0.59" stroke-dasharray="1.3 1.1"/><ellipse cx="1304.0" cy="591.7" rx="3.3" ry="1.6" transform="rotate(134 1304.0 591.7)" opacity="0.88" stroke-dasharray="1.3 1.1"/><ellipse cx="1308.6" cy="586.3" rx="6.4" ry="3.4" transform="rotate(43 1308.6 586.3)" opacity="0.86" stroke-dasharray="1.3 1.1"/><ellipse cx="1301.9" cy="567.9" rx="5.3" ry="4.7" transform="rotate(85 1301.9 567.9)" opacity="0.84" stroke-dasharray="1.3 1.1"/><ellipse cx="1311.0" cy="572.1" rx="4.2" ry="3.1" transform="rotate(103 1311.0 572.1)" opacity="0.62" stroke-dasharray="1.3 1.1"/><ellipse cx="1294.4" cy="600.7" rx="2.4" ry="2.0" transform="rotate(26 1294.4 600.7)" opacity="0.51" stroke-dasharray="1.3 1.1"/><ellipse cx="1306.1" cy="626.1" rx="3.7" ry="1.6" transform="rotate(5 1306.1 626.1)" opacity="0.52" stroke-dasharray="1.3 1.1"/><ellipse cx="1308.0" cy="576.5" rx="5.5" ry="4.1" transform="rotate(12 1308.0 576.5)" opacity="0.74" stroke-dasharray="1.3 1.1"/><ellipse cx="1281.3" cy="574.6" rx="6.1" ry="5.1" transform="rotate(12 1281.3 574.6)" opacity="0.85" stroke-dasharray="1.3 1.1"/><ellipse cx="1328.6" cy="620.7" rx="2.5" ry="1.2" transform="rotate(20 1328.6 620.7)" opacity="0.51" stroke-dasharray="1.3 1.1"/><ellipse cx="1322.2" cy="602.4" rx="5.2" ry="4.2" transform="rotate(114 1322.2 602.4)" opacity="0.61" stroke-dasharray="1.3 1.1"/><ellipse cx="1303.0" cy="597.3" rx="5.8" ry="2.7" transform="rotate(57 1303.0 597.3)" opacity="0.67" stroke-dasharray="1.3 1.1"/><ellipse cx="1307.6" cy="603.4" rx="3.4" ry="2.5" transform="rotate(66 1307.6 603.4)" opacity="0.63" stroke-dasharray="1.3 1.1"/><ellipse cx="1313.6" cy="608.7" rx="6.3" ry="4.3" transform="rotate(6 1313.6 608.7)" opacity="0.67" stroke-dasharray="1.3 1.1"/><ellipse cx="1283.7" cy="565.4" rx="3.7" ry="2.8" transform="rotate(97 1283.7 565.4)" opacity="0.59" stroke-dasharray="1.3 1.1"/><ellipse cx="1306.9" cy="593.6" rx="6.1" ry="2.7" transform="rotate(0 1306.9 593.6)" opacity="0.58" stroke-dasharray="1.3 1.1"/><ellipse cx="1324.8" cy="583.3" rx="2.0" ry="1.3" transform="rotate(88 1324.8 583.3)" opacity="0.82" stroke-dasharray="1.3 1.1"/><ellipse cx="1297.7" cy="602.0" rx="3.7" ry="3.0" transform="rotate(47 1297.7 602.0)" opacity="0.88" stroke-dasharray="1.3 1.1"/><ellipse cx="1295.6" cy="590.0" rx="5.5" ry="3.4" transform="rotate(20 1295.6 590.0)" opacity="0.75" stroke-dasharray="1.3 1.1"/><ellipse cx="1308.3" cy="619.5" rx="5.5" ry="4.3" transform="rotate(113 1308.3 619.5)" opacity="0.64" stroke-dasharray="1.3 1.1"/><ellipse cx="1290.8" cy="578.2" rx="6.5" ry="2.6" transform="rotate(160 1290.8 578.2)" opacity="0.51" stroke-dasharray="1.3 1.1"/><ellipse cx="1298.0" cy="596.4" rx="6.5" ry="4.1" transform="rotate(68 1298.0 596.4)" opacity="0.85" stroke-dasharray="1.3 1.1"/><ellipse cx="1294.5" cy="596.1" rx="4.7" ry="3.6" transform="rotate(136 1294.5 596.1)" opacity="0.76" stroke-dasharray="1.3 1.1"/><ellipse cx="1292.2" cy="583.9" rx="2.8" ry="2.3" transform="rotate(119 1292.2 583.9)" opacity="0.80" stroke-dasharray="1.3 1.1"/><ellipse cx="1299.2" cy="602.4" rx="5.9" ry="3.9" transform="rotate(23 1299.2 602.4)" opacity="0.68" stroke-dasharray="1.3 1.1"/><ellipse cx="1310.3" cy="597.6" rx="3.0" ry="1.5" transform="rotate(127 1310.3 597.6)" opacity="0.84" stroke-dasharray="1.3 1.1"/><ellipse cx="1301.1" cy="597.4" rx="3.2" ry="1.7" transform="rotate(94 1301.1 597.4)" opacity="0.56" stroke-dasharray="1.3 1.1"/><ellipse cx="1295.1" cy="586.9" rx="6.9" ry="5.2" transform="rotate(18 1295.1 586.9)" opacity="0.88" stroke-dasharray="1.3 1.1"/><ellipse cx="1304.1" cy="605.7" rx="6.9" ry="5.4" transform="rotate(132 1304.1 605.7)" opacity="0.67" stroke-dasharray="1.3 1.1"/><ellipse cx="1295.7" cy="603.1" rx="2.5" ry="1.2" transform="rotate(70 1295.7 603.1)" opacity="0.51" stroke-dasharray="1.3 1.1"/><ellipse cx="1282.1" cy="569.6" rx="5.5" ry="3.4" transform="rotate(114 1282.1 569.6)" opacity="0.69" stroke-dasharray="1.3 1.1"/><ellipse cx="1301.0" cy="608.5" rx="4.0" ry="3.0" transform="rotate(163 1301.0 608.5)" opacity="0.67" stroke-dasharray="1.3 1.1"/><ellipse cx="1295.3" cy="561.8" rx="4.1" ry="2.0" transform="rotate(130 1295.3 561.8)" opacity="0.85" stroke-dasharray="1.3 1.1"/><ellipse cx="1315.7" cy="588.3" rx="6.3" ry="4.5" transform="rotate(115 1315.7 588.3)" opacity="0.68" stroke-dasharray="1.3 1.1"/><ellipse cx="1287.6" cy="585.6" rx="2.5" ry="1.4" transform="rotate(141 1287.6 585.6)" opacity="0.79" stroke-dasharray="1.3 1.1"/><ellipse cx="1301.9" cy="579.1" rx="4.1" ry="2.5" transform="rotate(112 1301.9 579.1)" opacity="0.66" stroke-dasharray="1.3 1.1"/><ellipse cx="1309.0" cy="564.5" rx="2.9" ry="2.1" transform="rotate(140 1309.0 564.5)" opacity="0.66" stroke-dasharray="1.3 1.1"/><ellipse cx="1278.1" cy="544.4" rx="2.2" ry="1.4" transform="rotate(29 1278.1 544.4)" opacity="0.81" stroke-dasharray="1.3 1.1"/><ellipse cx="1314.8" cy="607.6" rx="2.5" ry="1.7" transform="rotate(97 1314.8 607.6)" opacity="0.79" stroke-dasharray="1.3 1.1"/><ellipse cx="1291.0" cy="565.3" rx="6.1" ry="3.9" transform="rotate(74 1291.0 565.3)" opacity="0.88" stroke-dasharray="1.3 1.1"/><ellipse cx="1293.9" cy="601.9" rx="4.0" ry="3.0" transform="rotate(22 1293.9 601.9)" opacity="0.89" stroke-dasharray="1.3 1.1"/><ellipse cx="1298.2" cy="587.4" rx="3.4" ry="1.9" transform="rotate(2 1298.2 587.4)" opacity="0.67" stroke-dasharray="1.3 1.1"/><ellipse cx="1285.0" cy="569.6" rx="3.8" ry="1.9" transform="rotate(40 1285.0 569.6)" opacity="0.80" stroke-dasharray="1.3 1.1"/><ellipse cx="1314.9" cy="607.7" rx="3.1" ry="2.4" transform="rotate(71 1314.9 607.7)" opacity="0.58" stroke-dasharray="1.3 1.1"/><ellipse cx="1302.3" cy="615.0" rx="6.0" ry="4.2" transform="rotate(84 1302.3 615.0)" opacity="0.72" stroke-dasharray="1.3 1.1"/><ellipse cx="1285.8" cy="606.1" rx="3.8" ry="2.6" transform="rotate(147 1285.8 606.1)" opacity="0.83" stroke-dasharray="1.3 1.1"/><ellipse cx="1293.9" cy="576.6" rx="4.7" ry="2.0" transform="rotate(150 1293.9 576.6)" opacity="0.64" stroke-dasharray="1.3 1.1"/><ellipse cx="1310.7" cy="595.6" rx="3.9" ry="1.9" transform="rotate(77 1310.7 595.6)" opacity="0.57" stroke-dasharray="1.3 1.1"/><ellipse cx="1315.1" cy="617.4" rx="3.4" ry="1.7" transform="rotate(54 1315.1 617.4)" opacity="0.69" stroke-dasharray="1.3 1.1"/><ellipse cx="1286.6" cy="570.4" rx="5.3" ry="2.9" transform="rotate(167 1286.6 570.4)" opacity="0.84" stroke-dasharray="1.3 1.1"/><ellipse cx="1311.6" cy="622.5" rx="6.5" ry="5.1" transform="rotate(25 1311.6 622.5)" opacity="0.83" stroke-dasharray="1.3 1.1"/><ellipse cx="1302.0" cy="587.5" rx="2.1" ry="1.8" transform="rotate(118 1302.0 587.5)" opacity="0.60" stroke-dasharray="1.3 1.1"/><ellipse cx="1303.2" cy="598.8" rx="3.2" ry="2.5" transform="rotate(62 1303.2 598.8)" opacity="0.56" stroke-dasharray="1.3 1.1"/><ellipse cx="1321.8" cy="611.2" rx="2.8" ry="2.4" transform="rotate(110 1321.8 611.2)" opacity="0.81" stroke-dasharray="1.3 1.1"/><ellipse cx="1307.5" cy="565.4" rx="5.9" ry="4.8" transform="rotate(36 1307.5 565.4)" opacity="0.78" stroke-dasharray="1.3 1.1"/><ellipse cx="1291.0" cy="561.2" rx="4.2" ry="3.5" transform="rotate(100 1291.0 561.2)" opacity="0.61" stroke-dasharray="1.3 1.1"/><ellipse cx="1298.3" cy="593.0" rx="4.5" ry="1.7" transform="rotate(84 1298.3 593.0)" opacity="0.56" stroke-dasharray="1.3 1.1"/><ellipse cx="1291.7" cy="570.2" rx="4.7" ry="3.9" transform="rotate(1 1291.7 570.2)" opacity="0.84" stroke-dasharray="1.3 1.1"/><ellipse cx="1289.5" cy="569.4" rx="5.3" ry="4.3" transform="rotate(67 1289.5 569.4)" opacity="0.67" stroke-dasharray="1.3 1.1"/><ellipse cx="1305.9" cy="596.2" rx="5.2" ry="3.6" transform="rotate(5 1305.9 596.2)" opacity="0.74" stroke-dasharray="1.3 1.1"/><ellipse cx="1310.2" cy="565.9" rx="3.7" ry="3.3" transform="rotate(92 1310.2 565.9)" opacity="0.69" stroke-dasharray="1.3 1.1"/><ellipse cx="1305.0" cy="593.0" rx="5.6" ry="3.9" transform="rotate(61 1305.0 593.0)" opacity="0.84" stroke-dasharray="1.3 1.1"/><ellipse cx="1289.2" cy="580.2" rx="4.6" ry="3.6" transform="rotate(38 1289.2 580.2)" opacity="0.67" stroke-dasharray="1.3 1.1"/><ellipse cx="1288.1" cy="573.0" rx="6.1" ry="3.1" transform="rotate(149 1288.1 573.0)" opacity="0.66" stroke-dasharray="1.3 1.1"/><ellipse cx="1295.5" cy="576.3" rx="4.5" ry="4.0" transform="rotate(118 1295.5 576.3)" opacity="0.82" stroke-dasharray="1.3 1.1"/><ellipse cx="1292.6" cy="585.6" rx="3.5" ry="2.4" transform="rotate(114 1292.6 585.6)" opacity="0.81" stroke-dasharray="1.3 1.1"/><ellipse cx="1311.9" cy="618.0" rx="6.4" ry="4.2" transform="rotate(9 1311.9 618.0)" opacity="0.62" stroke-dasharray="1.3 1.1"/><ellipse cx="1307.2" cy="601.2" rx="6.6" ry="4.5" transform="rotate(118 1307.2 601.2)" opacity="0.82" stroke-dasharray="1.3 1.1"/><ellipse cx="1317.3" cy="607.1" rx="5.1" ry="3.5" transform="rotate(125 1317.3 607.1)" opacity="0.74" stroke-dasharray="1.3 1.1"/><ellipse cx="1304.4" cy="582.7" rx="5.3" ry="3.2" transform="rotate(137 1304.4 582.7)" opacity="0.54" stroke-dasharray="1.3 1.1"/><ellipse cx="1301.1" cy="592.9" rx="5.9" ry="5.0" transform="rotate(118 1301.1 592.9)" opacity="0.65" stroke-dasharray="1.3 1.1"/><ellipse cx="1320.5" cy="597.3" rx="4.8" ry="2.4" transform="rotate(54 1320.5 597.3)" opacity="0.67" stroke-dasharray="1.3 1.1"/><ellipse cx="1290.9" cy="586.0" rx="5.2" ry="4.5" transform="rotate(10 1290.9 586.0)" opacity="0.73" stroke-dasharray="1.3 1.1"/><ellipse cx="1305.1" cy="598.8" rx="6.1" ry="4.0" transform="rotate(165 1305.1 598.8)" opacity="0.68" stroke-dasharray="1.3 1.1"/><ellipse cx="1309.5" cy="607.2" rx="5.0" ry="4.3" transform="rotate(177 1309.5 607.2)" opacity="0.69" stroke-dasharray="1.3 1.1"/><ellipse cx="1296.9" cy="584.2" rx="5.2" ry="2.4" transform="rotate(27 1296.9 584.2)" opacity="0.51" stroke-dasharray="1.3 1.1"/><ellipse cx="1314.3" cy="616.1" rx="2.6" ry="2.3" transform="rotate(16 1314.3 616.1)" opacity="0.85" stroke-dasharray="1.3 1.1"/><ellipse cx="1302.0" cy="592.7" rx="5.6" ry="2.7" transform="rotate(132 1302.0 592.7)" opacity="0.57" stroke-dasharray="1.3 1.1"/><ellipse cx="1311.6" cy="620.0" rx="5.6" ry="4.6" transform="rotate(131 1311.6 620.0)" opacity="0.53" stroke-dasharray="1.3 1.1"/><ellipse cx="1301.6" cy="567.2" rx="4.3" ry="3.7" transform="rotate(46 1301.6 567.2)" opacity="0.89" stroke-dasharray="1.3 1.1"/><ellipse cx="1302.9" cy="588.9" rx="2.1" ry="1.5" transform="rotate(147 1302.9 588.9)" opacity="0.53" stroke-dasharray="1.3 1.1"/><ellipse cx="1285.5" cy="585.3" rx="2.8" ry="2.3" transform="rotate(88 1285.5 585.3)" opacity="0.52" stroke-dasharray="1.3 1.1"/><ellipse cx="1287.3" cy="578.6" rx="4.2" ry="3.0" transform="rotate(26 1287.3 578.6)" opacity="0.82" stroke-dasharray="1.3 1.1"/><ellipse cx="1285.8" cy="578.0" rx="5.1" ry="3.0" transform="rotate(69 1285.8 578.0)" opacity="0.81" stroke-dasharray="1.3 1.1"/><ellipse cx="1320.3" cy="615.9" rx="4.8" ry="2.5" transform="rotate(11 1320.3 615.9)" opacity="0.89" stroke-dasharray="1.3 1.1"/><ellipse cx="1311.2" cy="574.0" rx="3.7" ry="2.5" transform="rotate(176 1311.2 574.0)" opacity="0.83" stroke-dasharray="1.3 1.1"/><ellipse cx="1300.1" cy="576.3" rx="4.1" ry="3.5" transform="rotate(68 1300.1 576.3)" opacity="0.77" stroke-dasharray="1.3 1.1"/><ellipse cx="1297.5" cy="556.1" rx="6.0" ry="3.1" transform="rotate(0 1297.5 556.1)" opacity="0.61" stroke-dasharray="1.3 1.1"/><ellipse cx="1287.5" cy="572.3" rx="6.1" ry="5.1" transform="rotate(8 1287.5 572.3)" opacity="0.83" stroke-dasharray="1.3 1.1"/><ellipse cx="1322.5" cy="596.1" rx="4.9" ry="2.4" transform="rotate(153 1322.5 596.1)" opacity="0.82" stroke-dasharray="1.3 1.1"/><ellipse cx="1310.1" cy="567.3" rx="3.7" ry="1.5" transform="rotate(100 1310.1 567.3)" opacity="0.82" stroke-dasharray="1.3 1.1"/><ellipse cx="1294.1" cy="604.6" rx="6.7" ry="3.2" transform="rotate(109 1294.1 604.6)" opacity="0.77" stroke-dasharray="1.3 1.1"/><ellipse cx="1295.3" cy="579.2" rx="3.3" ry="2.5" transform="rotate(142 1295.3 579.2)" opacity="0.68" stroke-dasharray="1.3 1.1"/><ellipse cx="1307.6" cy="619.9" rx="5.9" ry="2.8" transform="rotate(104 1307.6 619.9)" opacity="0.86" stroke-dasharray="1.3 1.1"/><ellipse cx="1315.7" cy="602.6" rx="4.4" ry="3.0" transform="rotate(34 1315.7 602.6)" opacity="0.58" stroke-dasharray="1.3 1.1"/><ellipse cx="1296.7" cy="606.4" rx="3.8" ry="2.5" transform="rotate(72 1296.7 606.4)" opacity="0.71" stroke-dasharray="1.3 1.1"/><ellipse cx="1301.6" cy="594.0" rx="7.0" ry="3.9" transform="rotate(19 1301.6 594.0)" opacity="0.75" stroke-dasharray="1.3 1.1"/><ellipse cx="1307.5" cy="590.2" rx="5.0" ry="2.7" transform="rotate(94 1307.5 590.2)" opacity="0.51" stroke-dasharray="1.3 1.1"/><ellipse cx="1322.0" cy="643.3" rx="6.3" ry="3.9" transform="rotate(102 1322.0 643.3)" opacity="0.60" stroke-dasharray="1.3 1.1"/><ellipse cx="1313.2" cy="589.4" rx="7.7" ry="5.9" transform="rotate(147 1313.2 589.4)" opacity="0.59" stroke-dasharray="1 1.6"/><ellipse cx="1299.4" cy="591.1" rx="3.6" ry="1.6" transform="rotate(15 1299.4 591.1)" opacity="0.32" stroke-dasharray="1 1.6"/><ellipse cx="1289.3" cy="547.7" rx="5.0" ry="4.4" transform="rotate(164 1289.3 547.7)" opacity="0.32" stroke-dasharray="1 1.6"/><ellipse cx="1298.9" cy="570.5" rx="3.2" ry="2.8" transform="rotate(46 1298.9 570.5)" opacity="0.47" stroke-dasharray="1 1.6"/><ellipse cx="1303.4" cy="548.7" rx="6.2" ry="3.5" transform="rotate(81 1303.4 548.7)" opacity="0.35" stroke-dasharray="1 1.6"/><ellipse cx="1338.4" cy="649.6" rx="3.7" ry="1.4" transform="rotate(46 1338.4 649.6)" opacity="0.41" stroke-dasharray="1 1.6"/><ellipse cx="1331.1" cy="621.3" rx="7.1" ry="2.7" transform="rotate(142 1331.1 621.3)" opacity="0.51" stroke-dasharray="1 1.6"/><ellipse cx="1305.1" cy="543.5" rx="2.8" ry="1.2" transform="rotate(136 1305.1 543.5)" opacity="0.58" stroke-dasharray="1 1.6"/><ellipse cx="1305.0" cy="579.0" rx="5.8" ry="4.4" transform="rotate(19 1305.0 579.0)" opacity="0.40" stroke-dasharray="1 1.6"/><ellipse cx="1297.1" cy="591.8" rx="5.1" ry="2.3" transform="rotate(43 1297.1 591.8)" opacity="0.34" stroke-dasharray="1 1.6"/><ellipse cx="1302.6" cy="587.9" rx="6.4" ry="2.9" transform="rotate(6 1302.6 587.9)" opacity="0.58" stroke-dasharray="1 1.6"/><ellipse cx="1285.7" cy="608.9" rx="7.3" ry="6.1" transform="rotate(25 1285.7 608.9)" opacity="0.43" stroke-dasharray="1 1.6"/><ellipse cx="1309.2" cy="634.7" rx="7.1" ry="5.0" transform="rotate(81 1309.2 634.7)" opacity="0.40" stroke-dasharray="1 1.6"/><ellipse cx="1316.3" cy="596.0" rx="6.0" ry="2.6" transform="rotate(40 1316.3 596.0)" opacity="0.32" stroke-dasharray="1 1.6"/><ellipse cx="1310.2" cy="578.6" rx="3.3" ry="2.7" transform="rotate(48 1310.2 578.6)" opacity="0.42" stroke-dasharray="1 1.6"/><ellipse cx="1300.5" cy="602.1" rx="7.1" ry="3.8" transform="rotate(30 1300.5 602.1)" opacity="0.45" stroke-dasharray="1 1.6"/><ellipse cx="1275.3" cy="580.1" rx="3.1" ry="2.8" transform="rotate(10 1275.3 580.1)" opacity="0.57" stroke-dasharray="1 1.6"/><ellipse cx="1304.0" cy="580.4" rx="5.1" ry="2.6" transform="rotate(46 1304.0 580.4)" opacity="0.36" stroke-dasharray="1 1.6"/><ellipse cx="1260.9" cy="558.4" rx="8.0" ry="6.9" transform="rotate(18 1260.9 558.4)" opacity="0.39" stroke-dasharray="1 1.6"/><ellipse cx="1306.6" cy="594.7" rx="6.5" ry="3.3" transform="rotate(176 1306.6 594.7)" opacity="0.30" stroke-dasharray="1 1.6"/><ellipse cx="1312.9" cy="592.9" rx="3.3" ry="1.1" transform="rotate(150 1312.9 592.9)" opacity="0.46" stroke-dasharray="1 1.6"/><ellipse cx="1297.4" cy="603.0" rx="7.5" ry="3.5" transform="rotate(103 1297.4 603.0)" opacity="0.34" stroke-dasharray="1 1.6"/><ellipse cx="1295.4" cy="611.9" rx="6.4" ry="2.9" transform="rotate(14 1295.4 611.9)" opacity="0.33" stroke-dasharray="1 1.6"/><ellipse cx="1299.5" cy="568.0" rx="4.0" ry="1.9" transform="rotate(110 1299.5 568.0)" opacity="0.51" stroke-dasharray="1 1.6"/><ellipse cx="1318.0" cy="594.9" rx="3.6" ry="1.4" transform="rotate(132 1318.0 594.9)" opacity="0.42" stroke-dasharray="1 1.6"/><ellipse cx="1304.4" cy="587.3" rx="7.0" ry="3.7" transform="rotate(152 1304.4 587.3)" opacity="0.56" stroke-dasharray="1 1.6"/><ellipse cx="1300.2" cy="586.4" rx="7.5" ry="4.6" transform="rotate(157 1300.2 586.4)" opacity="0.38" stroke-dasharray="1 1.6"/><ellipse cx="1293.8" cy="612.9" rx="4.5" ry="2.0" transform="rotate(67 1293.8 612.9)" opacity="0.48" stroke-dasharray="1 1.6"/><ellipse cx="1313.9" cy="615.2" rx="5.0" ry="3.1" transform="rotate(22 1313.9 615.2)" opacity="0.51" stroke-dasharray="1 1.6"/><ellipse cx="1326.7" cy="598.8" rx="4.3" ry="3.2" transform="rotate(69 1326.7 598.8)" opacity="0.53" stroke-dasharray="1 1.6"/><ellipse cx="1314.1" cy="632.3" rx="7.7" ry="4.8" transform="rotate(92 1314.1 632.3)" opacity="0.46" stroke-dasharray="1 1.6"/><ellipse cx="1300.4" cy="585.7" rx="7.8" ry="3.7" transform="rotate(33 1300.4 585.7)" opacity="0.33" stroke-dasharray="1 1.6"/><ellipse cx="1285.4" cy="598.0" rx="2.7" ry="1.1" transform="rotate(126 1285.4 598.0)" opacity="0.36" stroke-dasharray="1 1.6"/><ellipse cx="1314.2" cy="618.4" rx="5.7" ry="3.6" transform="rotate(126 1314.2 618.4)" opacity="0.33" stroke-dasharray="1 1.6"/><ellipse cx="1323.4" cy="607.3" rx="2.7" ry="1.1" transform="rotate(89 1323.4 607.3)" opacity="0.45" stroke-dasharray="1 1.6"/><ellipse cx="1296.5" cy="590.2" rx="4.7" ry="2.0" transform="rotate(107 1296.5 590.2)" opacity="0.56" stroke-dasharray="1 1.6"/><ellipse cx="1300.6" cy="610.8" rx="6.6" ry="2.9" transform="rotate(149 1300.6 610.8)" opacity="0.58" stroke-dasharray="1 1.6"/><ellipse cx="1287.9" cy="576.4" rx="7.1" ry="4.5" transform="rotate(71 1287.9 576.4)" opacity="0.58" stroke-dasharray="1 1.6"/><ellipse cx="1311.6" cy="589.2" rx="3.8" ry="2.0" transform="rotate(78 1311.6 589.2)" opacity="0.59" stroke-dasharray="1 1.6"/><ellipse cx="1328.2" cy="596.2" rx="7.0" ry="5.7" transform="rotate(10 1328.2 596.2)" opacity="0.46" stroke-dasharray="1 1.6"/><ellipse cx="1330.2" cy="633.9" rx="3.9" ry="2.3" transform="rotate(114 1330.2 633.9)" opacity="0.41" stroke-dasharray="1 1.6"/><ellipse cx="1298.9" cy="582.0" rx="4.9" ry="3.1" transform="rotate(4 1298.9 582.0)" opacity="0.34" stroke-dasharray="1 1.6"/><ellipse cx="1322.1" cy="623.7" rx="7.7" ry="5.3" transform="rotate(146 1322.1 623.7)" opacity="0.57" stroke-dasharray="1 1.6"/><ellipse cx="1305.6" cy="593.3" rx="6.0" ry="3.0" transform="rotate(122 1305.6 593.3)" opacity="0.38" stroke-dasharray="1 1.6"/><ellipse cx="1285.2" cy="542.1" rx="5.9" ry="2.9" transform="rotate(94 1285.2 542.1)" opacity="0.43" stroke-dasharray="1 1.6"/><ellipse cx="1312.2" cy="605.1" rx="4.2" ry="3.0" transform="rotate(22 1312.2 605.1)" opacity="0.48" stroke-dasharray="1 1.6"/><ellipse cx="1316.6" cy="612.5" rx="4.0" ry="2.4" transform="rotate(96 1316.6 612.5)" opacity="0.34" stroke-dasharray="1 1.6"/><ellipse cx="1302.5" cy="599.4" rx="4.1" ry="2.4" transform="rotate(52 1302.5 599.4)" opacity="0.37" stroke-dasharray="1 1.6"/><ellipse cx="1306.9" cy="615.0" rx="7.1" ry="4.9" transform="rotate(103 1306.9 615.0)" opacity="0.50" stroke-dasharray="1 1.6"/><ellipse cx="1293.3" cy="606.4" rx="5.0" ry="3.3" transform="rotate(110 1293.3 606.4)" opacity="0.44" stroke-dasharray="1 1.6"/></g>
<rect x="1246" y="636" width="110" height="9" fill="#3f3e44"/>
<rect x="1301" y="637" width="21" height="7" fill="#40d040"/>
<g fill="#56555c"><rect x="1246" y="645" width="2" height="5.500"/><rect x="1300" y="645" width="2" height="5.500"/><rect x="1354" y="645" width="2" height="5.500"/></g>
<rect x="1232" y="665" width="138" height="1" fill="#000"/>
</svg>
<div class="t" style="left:1236px;top:653px;width:20px;text-align:center;font-size:10.400px;color:#bcbcc0">-1</div>
<div class="t" style="left:1291px;top:653px;width:20px;text-align:center;font-size:10.400px;color:#bcbcc0">0</div>
<div class="t" style="left:1345px;top:653px;width:20px;text-align:center;font-size:10.400px;color:#bcbcc0">1</div>
</div>
</body>
</html>
